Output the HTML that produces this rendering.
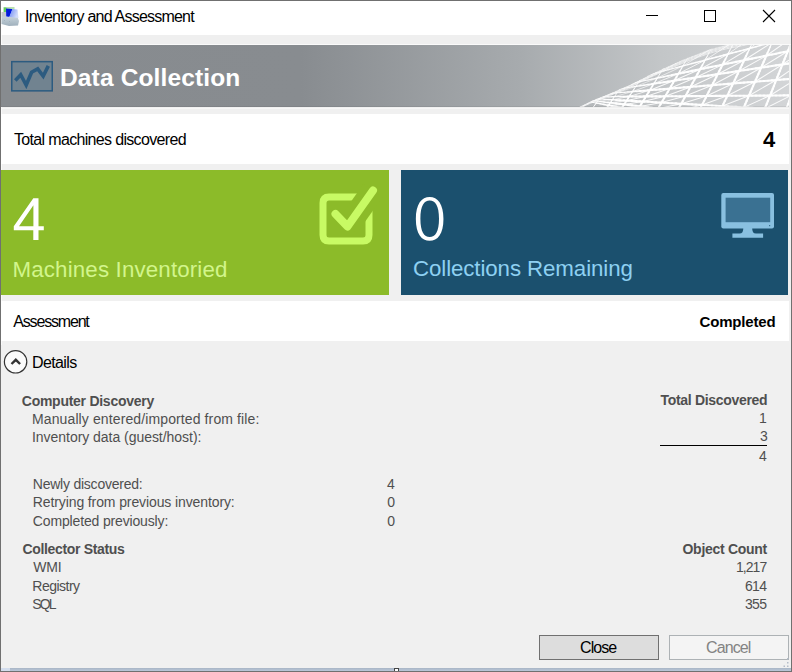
<!DOCTYPE html>
<html><head><meta charset="utf-8">
<style>
html,body{margin:0;padding:0;}
body{width:792px;height:672px;position:relative;overflow:hidden;background:#f0f0f0;font-family:"Liberation Sans",sans-serif;}
.a{position:absolute;}
.t{position:absolute;white-space:nowrap;line-height:1;}
#frame{position:absolute;left:0;top:0;width:792px;height:672px;box-sizing:border-box;border:1px solid #707070;z-index:50;}
</style></head><body>
<div class="a" style="left:0;top:0;width:792px;height:35px;background:#fff"></div>
<div class="a" style="left:0;top:35px;width:792px;height:9px;background:#efefef"></div>
<div class="a" style="left:0;top:44px;width:792px;height:1px;background:#fafafa"></div>
<div class="a" style="left:1px;top:35px;width:1px;height:310px;background:#fafafa"></div>
<!-- header -->
<div class="a" style="left:1px;top:45px;width:788px;height:62px;background:linear-gradient(90deg,#878b8f 0px,#888c90 300px,#a7abae 520px,#c3c6c8 660px,#d3d5d7 788px);overflow:hidden">
<svg width="788" height="62" viewBox="1 45 788 62" style="position:absolute;left:0;top:0"><defs><clipPath id="mc"><path d="M540.0 121.1 L542.0 120.4 L544.0 119.7 L546.0 119.0 L548.0 118.3 L550.0 117.6 L552.0 116.9 L554.0 116.2 L556.0 115.5 L558.0 114.8 L560.0 114.1 L562.0 113.3 L564.0 112.6 L566.0 111.8 L568.0 111.1 L570.0 110.3 L572.0 109.6 L574.0 108.8 L576.0 108.1 L578.0 107.3 L580.0 106.5 L582.0 105.6 L584.0 104.6 L586.0 103.6 L588.0 102.6 L590.0 101.7 L592.0 100.8 L594.0 100.0 L596.0 99.1 L598.0 98.3 L600.0 97.5 L602.0 96.7 L604.0 95.9 L606.0 95.0 L608.0 94.2 L610.0 93.4 L612.0 92.5 L614.0 91.7 L616.0 90.8 L618.0 90.0 L620.0 89.1 L622.0 88.2 L624.0 87.4 L626.0 86.5 L628.0 85.7 L630.0 84.8 L632.0 83.8 L634.0 82.8 L636.0 81.8 L638.0 80.7 L640.0 79.7 L642.0 78.7 L644.0 77.7 L646.0 76.7 L648.0 75.6 L650.0 74.7 L652.0 73.7 L654.0 72.8 L656.0 71.8 L658.0 70.9 L660.0 70.0 L662.0 69.0 L664.0 68.1 L666.0 67.2 L668.0 66.2 L670.0 65.3 L672.0 64.4 L674.0 63.6 L676.0 62.7 L678.0 61.9 L680.0 61.0 L682.0 60.1 L684.0 59.3 L686.0 58.4 L688.0 57.6 L690.0 56.7 L692.0 56.0 L694.0 55.2 L696.0 54.5 L698.0 53.7 L700.0 53.0 L702.0 52.3 L704.0 51.5 L706.0 50.8 L708.0 50.0 L710.0 49.3 L712.0 48.7 L714.0 48.2 L716.0 47.6 L718.0 47.0 L720.0 46.5 L722.0 45.9 L724.0 45.4 L726.0 44.9 L728.0 44.4 L730.0 44.0 L732.0 43.5 L734.0 43.1 L736.0 42.6 L738.0 42.2 L740.0 41.8 L742.0 41.3 L744.0 40.9 L746.0 40.4 L748.0 40.0 L750.0 39.6 L752.0 39.2 L754.0 38.9 L756.0 38.5 L758.0 38.2 L760.0 37.9 L762.0 37.5 L764.0 37.2 L766.0 36.9 L768.0 36.5 L770.0 36.2 L772.0 35.9 L774.0 35.5 L776.0 35.2 L778.0 34.9 L780.0 34.5 L782.0 34.2 L784.0 33.9 L786.0 33.5 L788.0 33.2 L790.0 32.9 L792.0 32.7 L794.0 32.4 L796.0 32.2 L798.0 31.9 L800.0 130.0 L540.0 130.0 Z"/></clipPath></defs><g clip-path="url(#mc)" fill="none" stroke-linecap="round"><path d="M560.0 99.0 L564.0 97.4" stroke="#fff" stroke-width="-1.03" opacity="0.95"/><path d="M564.0 97.4 L568.0 95.8" stroke="#fff" stroke-width="-1.04" opacity="0.95"/><path d="M568.0 95.8 L572.0 94.2" stroke="#fff" stroke-width="-1.05" opacity="0.95"/><path d="M572.0 94.2 L576.0 92.6" stroke="#fff" stroke-width="-1.06" opacity="0.95"/><path d="M576.0 92.6 L580.0 91.0" stroke="#fff" stroke-width="-1.06" opacity="0.95"/><path d="M580.0 91.0 L584.0 89.5" stroke="#fff" stroke-width="-1.03" opacity="0.95"/><path d="M584.0 89.5 L588.0 87.9" stroke="#fff" stroke-width="-0.98" opacity="0.95"/><path d="M588.0 87.9 L592.0 86.3" stroke="#fff" stroke-width="-0.96" opacity="0.95"/><path d="M592.0 86.3 L596.0 84.7" stroke="#fff" stroke-width="-0.95" opacity="0.95"/><path d="M596.0 84.7 L600.0 83.1" stroke="#fff" stroke-width="-0.94" opacity="0.95"/><path d="M600.0 83.1 L604.0 81.5" stroke="#fff" stroke-width="-0.94" opacity="0.95"/><path d="M604.0 81.5 L608.0 79.9" stroke="#fff" stroke-width="-0.93" opacity="0.95"/><path d="M608.0 79.9 L612.0 78.3" stroke="#fff" stroke-width="-0.92" opacity="0.95"/><path d="M612.0 78.3 L616.0 76.7" stroke="#fff" stroke-width="-0.91" opacity="0.95"/><path d="M616.0 76.7 L620.0 75.1" stroke="#fff" stroke-width="-0.90" opacity="0.95"/><path d="M620.0 75.1 L624.0 73.6" stroke="#fff" stroke-width="-0.88" opacity="0.95"/><path d="M624.0 73.6 L628.0 72.0" stroke="#fff" stroke-width="-0.87" opacity="0.95"/><path d="M628.0 72.0 L632.0 70.4" stroke="#fff" stroke-width="-0.84" opacity="0.95"/><path d="M632.0 70.4 L636.0 68.8" stroke="#fff" stroke-width="-0.79" opacity="0.95"/><path d="M636.0 68.8 L640.0 67.2" stroke="#fff" stroke-width="-0.74" opacity="0.95"/><path d="M640.0 67.2 L644.0 65.6" stroke="#fff" stroke-width="-0.69" opacity="0.95"/><path d="M644.0 65.6 L648.0 64.0" stroke="#fff" stroke-width="-0.65" opacity="0.95"/><path d="M648.0 64.0 L652.0 62.4" stroke="#fff" stroke-width="-0.61" opacity="0.95"/><path d="M652.0 62.4 L656.0 60.8" stroke="#fff" stroke-width="-0.58" opacity="0.95"/><path d="M656.0 60.8 L660.0 59.3" stroke="#fff" stroke-width="-0.55" opacity="0.95"/><path d="M660.0 59.3 L664.0 57.7" stroke="#fff" stroke-width="-0.52" opacity="0.95"/><path d="M664.0 57.7 L668.0 56.1" stroke="#fff" stroke-width="-0.49" opacity="0.95"/><path d="M668.0 56.1 L672.0 54.5" stroke="#fff" stroke-width="-0.47" opacity="0.95"/><path d="M672.0 54.5 L676.0 52.9" stroke="#fff" stroke-width="-0.45" opacity="0.95"/><path d="M676.0 52.9 L680.0 51.3" stroke="#fff" stroke-width="-0.44" opacity="0.95"/><path d="M680.0 51.3 L684.0 49.7" stroke="#fff" stroke-width="-0.43" opacity="0.95"/><path d="M684.0 49.7 L688.0 48.1" stroke="#fff" stroke-width="-0.41" opacity="0.95"/><path d="M688.0 48.1 L692.0 46.5" stroke="#fff" stroke-width="-0.41" opacity="0.95"/><path d="M692.0 46.5 L696.0 45.0" stroke="#fff" stroke-width="-0.42" opacity="0.95"/><path d="M696.0 45.0 L700.0 43.4" stroke="#fff" stroke-width="-0.43" opacity="0.95"/><path d="M700.0 43.4 L704.0 41.8" stroke="#fff" stroke-width="-0.44" opacity="0.95"/><path d="M704.0 41.8 L708.0 40.2" stroke="#fff" stroke-width="-0.46" opacity="0.95"/><path d="M708.0 40.2 L712.0 38.6" stroke="#fff" stroke-width="-0.48" opacity="0.95"/><path d="M712.0 38.6 L716.0 37.0" stroke="#fff" stroke-width="-0.53" opacity="0.95"/><path d="M716.0 37.0 L720.0 35.4" stroke="#fff" stroke-width="-0.58" opacity="0.95"/><path d="M720.0 35.4 L724.0 33.8" stroke="#fff" stroke-width="-0.64" opacity="0.95"/><path d="M724.0 33.8 L728.0 32.2" stroke="#fff" stroke-width="-0.70" opacity="0.95"/><path d="M728.0 32.2 L732.0 30.6" stroke="#fff" stroke-width="-0.78" opacity="0.95"/><path d="M732.0 30.6 L736.0 29.1" stroke="#fff" stroke-width="-0.85" opacity="0.95"/><path d="M560.0 98.7 L564.0 97.3" stroke="#fff" stroke-width="-1.04" opacity="0.95"/><path d="M564.0 97.3 L568.0 96.0" stroke="#fff" stroke-width="-1.02" opacity="0.95"/><path d="M568.0 96.0 L572.0 94.7" stroke="#fff" stroke-width="-1.00" opacity="0.95"/><path d="M572.0 94.7 L576.0 93.4" stroke="#fff" stroke-width="-0.98" opacity="0.95"/><path d="M576.0 93.4 L580.0 92.0" stroke="#fff" stroke-width="-0.95" opacity="0.95"/><path d="M580.0 92.0 L584.0 90.7" stroke="#fff" stroke-width="-0.89" opacity="0.95"/><path d="M584.0 90.7 L588.0 89.4" stroke="#fff" stroke-width="-0.82" opacity="0.95"/><path d="M588.0 89.4 L592.0 88.1" stroke="#fff" stroke-width="-0.76" opacity="0.95"/><path d="M592.0 88.1 L596.0 86.8" stroke="#fff" stroke-width="-0.73" opacity="0.95"/><path d="M596.0 86.8 L600.0 85.4" stroke="#fff" stroke-width="-0.69" opacity="0.95"/><path d="M600.0 85.4 L604.0 84.1" stroke="#fff" stroke-width="-0.66" opacity="0.95"/><path d="M604.0 84.1 L608.0 82.8" stroke="#fff" stroke-width="-0.62" opacity="0.95"/><path d="M608.0 82.8 L612.0 81.5" stroke="#fff" stroke-width="-0.59" opacity="0.95"/><path d="M612.0 81.5 L616.0 80.2" stroke="#fff" stroke-width="-0.54" opacity="0.95"/><path d="M616.0 80.2 L620.0 78.8" stroke="#fff" stroke-width="-0.50" opacity="0.95"/><path d="M620.0 78.8 L624.0 77.5" stroke="#fff" stroke-width="-0.46" opacity="0.95"/><path d="M624.0 77.5 L628.0 76.2" stroke="#fff" stroke-width="-0.42" opacity="0.95"/><path d="M628.0 76.2 L632.0 74.9" stroke="#fff" stroke-width="-0.36" opacity="0.95"/><path d="M632.0 74.9 L636.0 73.5" stroke="#fff" stroke-width="-0.28" opacity="0.95"/><path d="M636.0 73.5 L640.0 72.2" stroke="#fff" stroke-width="-0.20" opacity="0.95"/><path d="M640.0 72.2 L644.0 70.9" stroke="#fff" stroke-width="-0.13" opacity="0.95"/><path d="M644.0 70.9 L648.0 69.6" stroke="#fff" stroke-width="-0.05" opacity="0.95"/><path d="M648.0 69.6 L652.0 68.3" stroke="#fff" stroke-width="0.02" opacity="0.95"/><path d="M652.0 68.3 L656.0 66.9" stroke="#fff" stroke-width="0.08" opacity="0.95"/><path d="M656.0 66.9 L660.0 65.6" stroke="#fff" stroke-width="0.13" opacity="0.95"/><path d="M660.0 65.6 L664.0 64.3" stroke="#fff" stroke-width="0.19" opacity="0.95"/><path d="M664.0 64.3 L668.0 63.0" stroke="#fff" stroke-width="0.25" opacity="0.95"/><path d="M668.0 63.0 L672.0 61.7" stroke="#fff" stroke-width="0.30" opacity="0.95"/><path d="M672.0 61.7 L676.0 60.3" stroke="#fff" stroke-width="0.34" opacity="0.95"/><path d="M676.0 60.3 L680.0 59.0" stroke="#fff" stroke-width="0.39" opacity="0.95"/><path d="M680.0 59.0 L684.0 57.7" stroke="#fff" stroke-width="0.43" opacity="0.95"/><path d="M684.0 57.7 L688.0 56.4" stroke="#fff" stroke-width="0.47" opacity="0.95"/><path d="M688.0 56.4 L692.0 55.0" stroke="#fff" stroke-width="0.50" opacity="0.95"/><path d="M692.0 55.0 L696.0 53.7" stroke="#fff" stroke-width="0.52" opacity="0.95"/><path d="M696.0 53.7 L700.0 52.4" stroke="#fff" stroke-width="0.54" opacity="0.95"/><path d="M700.0 52.4 L704.0 51.1" stroke="#fff" stroke-width="0.55" opacity="0.95"/><path d="M704.0 51.1 L708.0 49.8" stroke="#fff" stroke-width="0.57" opacity="0.95"/><path d="M708.0 49.8 L712.0 48.4" stroke="#fff" stroke-width="0.57" opacity="0.95"/><path d="M712.0 48.4 L716.0 47.1" stroke="#fff" stroke-width="0.55" opacity="0.95"/><path d="M716.0 47.1 L720.0 45.8" stroke="#fff" stroke-width="0.53" opacity="0.95"/><path d="M720.0 45.8 L724.0 44.5" stroke="#fff" stroke-width="0.51" opacity="0.95"/><path d="M724.0 44.5 L728.0 43.2" stroke="#fff" stroke-width="0.47" opacity="0.95"/><path d="M728.0 43.2 L732.0 41.8" stroke="#fff" stroke-width="0.42" opacity="0.95"/><path d="M732.0 41.8 L736.0 40.5" stroke="#fff" stroke-width="0.37" opacity="0.95"/><path d="M736.0 40.5 L740.0 39.2" stroke="#fff" stroke-width="0.32" opacity="0.95"/><path d="M740.0 39.2 L744.0 37.9" stroke="#fff" stroke-width="0.28" opacity="0.95"/><path d="M744.0 37.9 L748.0 36.5" stroke="#fff" stroke-width="0.23" opacity="0.95"/><path d="M748.0 36.5 L752.0 35.2" stroke="#fff" stroke-width="0.17" opacity="0.95"/><path d="M752.0 35.2 L756.0 33.9" stroke="#fff" stroke-width="0.10" opacity="0.95"/><path d="M756.0 33.9 L760.0 32.6" stroke="#fff" stroke-width="0.03" opacity="0.95"/><path d="M760.0 32.6 L764.0 31.3" stroke="#fff" stroke-width="-0.04" opacity="0.95"/><path d="M764.0 31.3 L768.0 29.9" stroke="#fff" stroke-width="-0.11" opacity="0.95"/><path d="M560.0 98.3 L564.0 97.3" stroke="#fff" stroke-width="-1.04" opacity="0.95"/><path d="M564.0 97.3 L568.0 96.2" stroke="#fff" stroke-width="-0.99" opacity="0.95"/><path d="M568.0 96.2 L572.0 95.2" stroke="#fff" stroke-width="-0.95" opacity="0.95"/><path d="M572.0 95.2 L576.0 94.1" stroke="#fff" stroke-width="-0.90" opacity="0.95"/><path d="M576.0 94.1 L580.0 93.0" stroke="#fff" stroke-width="-0.84" opacity="0.95"/><path d="M580.0 93.0 L584.0 92.0" stroke="#fff" stroke-width="-0.75" opacity="0.95"/><path d="M584.0 92.0 L588.0 90.9" stroke="#fff" stroke-width="-0.65" opacity="0.95"/><path d="M588.0 90.9 L592.0 89.9" stroke="#fff" stroke-width="-0.57" opacity="0.95"/><path d="M592.0 89.9 L596.0 88.8" stroke="#fff" stroke-width="-0.50" opacity="0.95"/><path d="M596.0 88.8 L600.0 87.8" stroke="#fff" stroke-width="-0.44" opacity="0.95"/><path d="M600.0 87.8 L604.0 86.7" stroke="#fff" stroke-width="-0.38" opacity="0.95"/><path d="M604.0 86.7 L608.0 85.7" stroke="#fff" stroke-width="-0.32" opacity="0.95"/><path d="M608.0 85.7 L612.0 84.6" stroke="#fff" stroke-width="-0.25" opacity="0.95"/><path d="M612.0 84.6 L616.0 83.6" stroke="#fff" stroke-width="-0.18" opacity="0.95"/><path d="M616.0 83.6 L620.0 82.5" stroke="#fff" stroke-width="-0.11" opacity="0.95"/><path d="M620.0 82.5 L624.0 81.5" stroke="#fff" stroke-width="-0.04" opacity="0.95"/><path d="M624.0 81.5 L628.0 80.4" stroke="#fff" stroke-width="0.04" opacity="0.95"/><path d="M628.0 80.4 L632.0 79.4" stroke="#fff" stroke-width="0.12" opacity="0.95"/><path d="M632.0 79.4 L636.0 78.3" stroke="#fff" stroke-width="0.23" opacity="0.95"/><path d="M636.0 78.3 L640.0 77.2" stroke="#fff" stroke-width="0.33" opacity="0.95"/><path d="M640.0 77.2 L644.0 76.2" stroke="#fff" stroke-width="0.44" opacity="0.95"/><path d="M644.0 76.2 L648.0 75.1" stroke="#fff" stroke-width="0.55" opacity="0.95"/><path d="M648.0 75.1 L652.0 74.1" stroke="#fff" stroke-width="0.64" opacity="0.95"/><path d="M652.0 74.1 L656.0 73.0" stroke="#fff" stroke-width="0.73" opacity="0.95"/><path d="M656.0 73.0 L660.0 72.0" stroke="#fff" stroke-width="0.82" opacity="0.95"/><path d="M660.0 72.0 L664.0 70.9" stroke="#fff" stroke-width="0.90" opacity="0.95"/><path d="M664.0 70.9 L668.0 69.9" stroke="#fff" stroke-width="0.99" opacity="0.95"/><path d="M668.0 69.9 L672.0 68.8" stroke="#fff" stroke-width="1.07" opacity="0.95"/><path d="M672.0 68.8 L676.0 67.8" stroke="#fff" stroke-width="1.14" opacity="0.95"/><path d="M676.0 67.8 L680.0 66.7" stroke="#fff" stroke-width="1.21" opacity="0.95"/><path d="M680.0 66.7 L684.0 65.7" stroke="#fff" stroke-width="1.28" opacity="0.95"/><path d="M684.0 65.7 L688.0 64.6" stroke="#fff" stroke-width="1.35" opacity="0.95"/><path d="M688.0 64.6 L692.0 63.5" stroke="#fff" stroke-width="1.41" opacity="0.95"/><path d="M692.0 63.5 L696.0 62.5" stroke="#fff" stroke-width="1.46" opacity="0.95"/><path d="M696.0 62.5 L700.0 61.4" stroke="#fff" stroke-width="1.51" opacity="0.95"/><path d="M700.0 61.4 L704.0 60.4" stroke="#fff" stroke-width="1.55" opacity="0.95"/><path d="M704.0 60.4 L708.0 59.3" stroke="#fff" stroke-width="1.60" opacity="0.95"/><path d="M708.0 59.3 L712.0 58.3" stroke="#fff" stroke-width="1.63" opacity="0.95"/><path d="M712.0 58.3 L716.0 57.2" stroke="#fff" stroke-width="1.63" opacity="0.95"/><path d="M716.0 57.2 L720.0 56.2" stroke="#fff" stroke-width="1.64" opacity="0.95"/><path d="M720.0 56.2 L724.0 55.1" stroke="#fff" stroke-width="1.65" opacity="0.95"/><path d="M724.0 55.1 L728.0 54.1" stroke="#fff" stroke-width="1.64" opacity="0.95"/><path d="M728.0 54.1 L732.0 53.0" stroke="#fff" stroke-width="1.62" opacity="0.95"/><path d="M732.0 53.0 L736.0 52.0" stroke="#fff" stroke-width="1.60" opacity="0.95"/><path d="M736.0 52.0 L740.0 50.9" stroke="#fff" stroke-width="1.58" opacity="0.95"/><path d="M740.0 50.9 L744.0 49.9" stroke="#fff" stroke-width="1.56" opacity="0.95"/><path d="M744.0 49.9 L748.0 48.8" stroke="#fff" stroke-width="1.54" opacity="0.95"/><path d="M748.0 48.8 L752.0 47.7" stroke="#fff" stroke-width="1.51" opacity="0.95"/><path d="M752.0 47.7 L756.0 46.7" stroke="#fff" stroke-width="1.47" opacity="0.95"/><path d="M756.0 46.7 L760.0 45.6" stroke="#fff" stroke-width="1.43" opacity="0.95"/><path d="M760.0 45.6 L764.0 44.6" stroke="#fff" stroke-width="1.39" opacity="0.95"/><path d="M764.0 44.6 L768.0 43.5" stroke="#fff" stroke-width="1.35" opacity="0.95"/><path d="M768.0 43.5 L772.0 42.5" stroke="#fff" stroke-width="1.31" opacity="0.95"/><path d="M772.0 42.5 L776.0 41.4" stroke="#fff" stroke-width="1.27" opacity="0.95"/><path d="M776.0 41.4 L780.0 40.4" stroke="#fff" stroke-width="1.22" opacity="0.95"/><path d="M780.0 40.4 L784.0 39.3" stroke="#fff" stroke-width="1.18" opacity="0.95"/><path d="M784.0 39.3 L788.0 38.3" stroke="#fff" stroke-width="1.14" opacity="0.95"/><path d="M788.0 38.3 L792.0 37.2" stroke="#fff" stroke-width="1.09" opacity="0.95"/><path d="M792.0 37.2 L796.0 36.2" stroke="#fff" stroke-width="1.03" opacity="0.95"/><path d="M560.0 98.0 L564.0 97.2" stroke="#fff" stroke-width="-1.05" opacity="0.95"/><path d="M564.0 97.2 L568.0 96.4" stroke="#fff" stroke-width="-0.98" opacity="0.95"/><path d="M568.0 96.4 L572.0 95.6" stroke="#fff" stroke-width="-0.90" opacity="0.95"/><path d="M572.0 95.6 L576.0 94.7" stroke="#fff" stroke-width="-0.83" opacity="0.95"/><path d="M576.0 94.7 L580.0 93.9" stroke="#fff" stroke-width="-0.75" opacity="0.95"/><path d="M580.0 93.9 L584.0 93.1" stroke="#fff" stroke-width="-0.64" opacity="0.95"/><path d="M584.0 93.1 L588.0 92.3" stroke="#fff" stroke-width="-0.51" opacity="0.95"/><path d="M588.0 92.3 L592.0 91.5" stroke="#fff" stroke-width="-0.40" opacity="0.95"/><path d="M592.0 91.5 L596.0 90.6" stroke="#fff" stroke-width="-0.31" opacity="0.95"/><path d="M596.0 90.6 L600.0 89.8" stroke="#fff" stroke-width="-0.22" opacity="0.95"/><path d="M600.0 89.8 L604.0 89.0" stroke="#fff" stroke-width="-0.14" opacity="0.95"/><path d="M604.0 89.0 L608.0 88.2" stroke="#fff" stroke-width="-0.05" opacity="0.95"/><path d="M608.0 88.2 L612.0 87.3" stroke="#fff" stroke-width="0.04" opacity="0.95"/><path d="M612.0 87.3 L616.0 86.5" stroke="#fff" stroke-width="0.14" opacity="0.95"/><path d="M616.0 86.5 L620.0 85.7" stroke="#fff" stroke-width="0.24" opacity="0.95"/><path d="M620.0 85.7 L624.0 84.9" stroke="#fff" stroke-width="0.33" opacity="0.95"/><path d="M624.0 84.9 L628.0 84.1" stroke="#fff" stroke-width="0.43" opacity="0.95"/><path d="M628.0 84.1 L632.0 83.2" stroke="#fff" stroke-width="0.54" opacity="0.95"/><path d="M632.0 83.2 L636.0 82.4" stroke="#fff" stroke-width="0.67" opacity="0.95"/><path d="M636.0 82.4 L640.0 81.6" stroke="#fff" stroke-width="0.80" opacity="0.95"/><path d="M640.0 81.6 L644.0 80.8" stroke="#fff" stroke-width="0.93" opacity="0.95"/><path d="M644.0 80.8 L648.0 80.0" stroke="#fff" stroke-width="1.06" opacity="0.95"/><path d="M648.0 80.0 L652.0 79.1" stroke="#fff" stroke-width="1.18" opacity="0.95"/><path d="M652.0 79.1 L656.0 78.3" stroke="#fff" stroke-width="1.29" opacity="0.95"/><path d="M656.0 78.3 L660.0 77.5" stroke="#fff" stroke-width="1.41" opacity="0.95"/><path d="M660.0 77.5 L664.0 76.7" stroke="#fff" stroke-width="1.52" opacity="0.95"/><path d="M664.0 76.7 L668.0 75.8" stroke="#fff" stroke-width="1.63" opacity="0.95"/><path d="M668.0 75.8 L672.0 75.0" stroke="#fff" stroke-width="1.73" opacity="0.95"/><path d="M672.0 75.0 L676.0 74.2" stroke="#fff" stroke-width="1.83" opacity="0.95"/><path d="M676.0 74.2 L680.0 73.4" stroke="#fff" stroke-width="1.93" opacity="0.95"/><path d="M680.0 73.4 L684.0 72.6" stroke="#fff" stroke-width="2.02" opacity="0.95"/><path d="M684.0 72.6 L688.0 71.7" stroke="#fff" stroke-width="2.10" opacity="0.95"/><path d="M688.0 71.7 L692.0 70.9" stroke="#fff" stroke-width="2.10" opacity="0.95"/><path d="M692.0 70.9 L696.0 70.1" stroke="#fff" stroke-width="2.10" opacity="0.95"/><path d="M696.0 70.1 L700.0 69.3" stroke="#fff" stroke-width="2.10" opacity="0.95"/><path d="M700.0 69.3 L704.0 68.5" stroke="#fff" stroke-width="2.10" opacity="0.95"/><path d="M704.0 68.5 L708.0 67.6" stroke="#fff" stroke-width="2.10" opacity="0.95"/><path d="M708.0 67.6 L712.0 66.8" stroke="#fff" stroke-width="2.10" opacity="0.95"/><path d="M712.0 66.8 L716.0 66.0" stroke="#fff" stroke-width="2.10" opacity="0.95"/><path d="M716.0 66.0 L720.0 65.2" stroke="#fff" stroke-width="2.10" opacity="0.95"/><path d="M720.0 65.2 L724.0 64.3" stroke="#fff" stroke-width="2.10" opacity="0.95"/><path d="M724.0 64.3 L728.0 63.5" stroke="#fff" stroke-width="2.10" opacity="0.95"/><path d="M728.0 63.5 L732.0 62.7" stroke="#fff" stroke-width="2.10" opacity="0.95"/><path d="M732.0 62.7 L736.0 61.9" stroke="#fff" stroke-width="2.10" opacity="0.95"/><path d="M736.0 61.9 L740.0 61.1" stroke="#fff" stroke-width="2.10" opacity="0.95"/><path d="M740.0 61.1 L744.0 60.2" stroke="#fff" stroke-width="2.10" opacity="0.95"/><path d="M744.0 60.2 L748.0 59.4" stroke="#fff" stroke-width="2.10" opacity="0.95"/><path d="M748.0 59.4 L752.0 58.6" stroke="#fff" stroke-width="2.10" opacity="0.95"/><path d="M752.0 58.6 L756.0 57.8" stroke="#fff" stroke-width="2.10" opacity="0.95"/><path d="M756.0 57.8 L760.0 57.0" stroke="#fff" stroke-width="2.10" opacity="0.95"/><path d="M760.0 57.0 L764.0 56.1" stroke="#fff" stroke-width="2.10" opacity="0.95"/><path d="M764.0 56.1 L768.0 55.3" stroke="#fff" stroke-width="2.10" opacity="0.95"/><path d="M768.0 55.3 L772.0 54.5" stroke="#fff" stroke-width="2.10" opacity="0.95"/><path d="M772.0 54.5 L776.0 53.7" stroke="#fff" stroke-width="2.10" opacity="0.95"/><path d="M776.0 53.7 L780.0 52.8" stroke="#fff" stroke-width="2.10" opacity="0.95"/><path d="M780.0 52.8 L784.0 52.0" stroke="#fff" stroke-width="2.10" opacity="0.95"/><path d="M784.0 52.0 L788.0 51.2" stroke="#fff" stroke-width="2.10" opacity="0.95"/><path d="M788.0 51.2 L792.0 50.4" stroke="#fff" stroke-width="2.10" opacity="0.95"/><path d="M792.0 50.4 L796.0 49.6" stroke="#fff" stroke-width="2.10" opacity="0.95"/><path d="M560.0 97.7 L564.0 97.1" stroke="#fff" stroke-width="-1.05" opacity="0.95"/><path d="M564.0 97.1 L568.0 96.6" stroke="#fff" stroke-width="-0.96" opacity="0.95"/><path d="M568.0 96.6 L572.0 96.0" stroke="#fff" stroke-width="-0.86" opacity="0.95"/><path d="M572.0 96.0 L576.0 95.4" stroke="#fff" stroke-width="-0.76" opacity="0.95"/><path d="M576.0 95.4 L580.0 94.8" stroke="#fff" stroke-width="-0.66" opacity="0.95"/><path d="M580.0 94.8 L584.0 94.2" stroke="#fff" stroke-width="-0.52" opacity="0.95"/><path d="M584.0 94.2 L588.0 93.6" stroke="#fff" stroke-width="-0.37" opacity="0.95"/><path d="M588.0 93.6 L592.0 93.0" stroke="#fff" stroke-width="-0.24" opacity="0.95"/><path d="M592.0 93.0 L596.0 92.4" stroke="#fff" stroke-width="-0.13" opacity="0.95"/><path d="M596.0 92.4 L600.0 91.8" stroke="#fff" stroke-width="-0.01" opacity="0.95"/><path d="M600.0 91.8 L604.0 91.2" stroke="#fff" stroke-width="0.10" opacity="0.95"/><path d="M604.0 91.2 L608.0 90.6" stroke="#fff" stroke-width="0.21" opacity="0.95"/><path d="M608.0 90.6 L612.0 90.0" stroke="#fff" stroke-width="0.32" opacity="0.95"/><path d="M612.0 90.0 L616.0 89.4" stroke="#fff" stroke-width="0.44" opacity="0.95"/><path d="M616.0 89.4 L620.0 88.8" stroke="#fff" stroke-width="0.56" opacity="0.95"/><path d="M620.0 88.8 L624.0 88.2" stroke="#fff" stroke-width="0.68" opacity="0.95"/><path d="M624.0 88.2 L628.0 87.6" stroke="#fff" stroke-width="0.80" opacity="0.95"/><path d="M628.0 87.6 L632.0 87.0" stroke="#fff" stroke-width="0.94" opacity="0.95"/><path d="M632.0 87.0 L636.0 86.4" stroke="#fff" stroke-width="1.09" opacity="0.95"/><path d="M636.0 86.4 L640.0 85.8" stroke="#fff" stroke-width="1.25" opacity="0.95"/><path d="M640.0 85.8 L644.0 85.2" stroke="#fff" stroke-width="1.40" opacity="0.95"/><path d="M644.0 85.2 L648.0 84.6" stroke="#fff" stroke-width="1.56" opacity="0.95"/><path d="M648.0 84.6 L652.0 84.0" stroke="#fff" stroke-width="1.70" opacity="0.95"/><path d="M652.0 84.0 L656.0 83.4" stroke="#fff" stroke-width="1.84" opacity="0.95"/><path d="M656.0 83.4 L660.0 82.8" stroke="#fff" stroke-width="1.97" opacity="0.95"/><path d="M660.0 82.8 L664.0 82.2" stroke="#fff" stroke-width="2.10" opacity="0.95"/><path d="M664.0 82.2 L668.0 81.6" stroke="#fff" stroke-width="2.10" opacity="0.95"/><path d="M668.0 81.6 L672.0 81.0" stroke="#fff" stroke-width="2.10" opacity="0.95"/><path d="M672.0 81.0 L676.0 80.4" stroke="#fff" stroke-width="2.10" opacity="0.95"/><path d="M676.0 80.4 L680.0 79.8" stroke="#fff" stroke-width="2.10" opacity="0.95"/><path d="M680.0 79.8 L684.0 79.2" stroke="#fff" stroke-width="2.10" opacity="0.95"/><path d="M684.0 79.2 L688.0 78.6" stroke="#fff" stroke-width="2.10" opacity="0.95"/><path d="M688.0 78.6 L692.0 78.0" stroke="#fff" stroke-width="2.10" opacity="0.95"/><path d="M692.0 78.0 L696.0 77.4" stroke="#fff" stroke-width="2.10" opacity="0.95"/><path d="M696.0 77.4 L700.0 76.8" stroke="#fff" stroke-width="2.10" opacity="0.95"/><path d="M700.0 76.8 L704.0 76.2" stroke="#fff" stroke-width="2.10" opacity="0.95"/><path d="M704.0 76.2 L708.0 75.6" stroke="#fff" stroke-width="2.10" opacity="0.95"/><path d="M708.0 75.6 L712.0 75.0" stroke="#fff" stroke-width="2.10" opacity="0.95"/><path d="M712.0 75.0 L716.0 74.4" stroke="#fff" stroke-width="2.10" opacity="0.95"/><path d="M716.0 74.4 L720.0 73.8" stroke="#fff" stroke-width="2.10" opacity="0.95"/><path d="M720.0 73.8 L724.0 73.2" stroke="#fff" stroke-width="2.10" opacity="0.95"/><path d="M724.0 73.2 L728.0 72.6" stroke="#fff" stroke-width="2.10" opacity="0.95"/><path d="M728.0 72.6 L732.0 72.0" stroke="#fff" stroke-width="2.10" opacity="0.95"/><path d="M732.0 72.0 L736.0 71.4" stroke="#fff" stroke-width="2.10" opacity="0.95"/><path d="M736.0 71.4 L740.0 70.8" stroke="#fff" stroke-width="2.10" opacity="0.95"/><path d="M740.0 70.8 L744.0 70.2" stroke="#fff" stroke-width="2.10" opacity="0.95"/><path d="M744.0 70.2 L748.0 69.6" stroke="#fff" stroke-width="2.10" opacity="0.95"/><path d="M748.0 69.6 L752.0 69.0" stroke="#fff" stroke-width="2.10" opacity="0.95"/><path d="M752.0 69.0 L756.0 68.4" stroke="#fff" stroke-width="2.10" opacity="0.95"/><path d="M756.0 68.4 L760.0 67.8" stroke="#fff" stroke-width="2.10" opacity="0.95"/><path d="M760.0 67.8 L764.0 67.2" stroke="#fff" stroke-width="2.10" opacity="0.95"/><path d="M764.0 67.2 L768.0 66.6" stroke="#fff" stroke-width="2.10" opacity="0.95"/><path d="M768.0 66.6 L772.0 66.0" stroke="#fff" stroke-width="2.10" opacity="0.95"/><path d="M772.0 66.0 L776.0 65.4" stroke="#fff" stroke-width="2.10" opacity="0.95"/><path d="M776.0 65.4 L780.0 64.8" stroke="#fff" stroke-width="2.10" opacity="0.95"/><path d="M780.0 64.8 L784.0 64.2" stroke="#fff" stroke-width="2.10" opacity="0.95"/><path d="M784.0 64.2 L788.0 63.6" stroke="#fff" stroke-width="2.10" opacity="0.95"/><path d="M788.0 63.6 L792.0 63.1" stroke="#fff" stroke-width="2.10" opacity="0.95"/><path d="M792.0 63.1 L796.0 62.5" stroke="#fff" stroke-width="2.10" opacity="0.95"/><path d="M560.0 97.4 L564.0 97.1" stroke="#fff" stroke-width="-1.06" opacity="0.95"/><path d="M564.0 97.1 L568.0 96.8" stroke="#fff" stroke-width="-0.94" opacity="0.95"/><path d="M568.0 96.8 L572.0 96.4" stroke="#fff" stroke-width="-0.81" opacity="0.95"/><path d="M572.0 96.4 L576.0 96.1" stroke="#fff" stroke-width="-0.68" opacity="0.95"/><path d="M576.0 96.1 L580.0 95.8" stroke="#fff" stroke-width="-0.55" opacity="0.95"/><path d="M580.0 95.8 L584.0 95.5" stroke="#fff" stroke-width="-0.38" opacity="0.95"/><path d="M584.0 95.5 L588.0 95.2" stroke="#fff" stroke-width="-0.20" opacity="0.95"/><path d="M588.0 95.2 L592.0 94.8" stroke="#fff" stroke-width="-0.04" opacity="0.95"/><path d="M592.0 94.8 L596.0 94.5" stroke="#fff" stroke-width="0.10" opacity="0.95"/><path d="M596.0 94.5 L600.0 94.2" stroke="#fff" stroke-width="0.24" opacity="0.95"/><path d="M600.0 94.2 L604.0 93.9" stroke="#fff" stroke-width="0.39" opacity="0.95"/><path d="M604.0 93.9 L608.0 93.5" stroke="#fff" stroke-width="0.53" opacity="0.95"/><path d="M608.0 93.5 L612.0 93.2" stroke="#fff" stroke-width="0.67" opacity="0.95"/><path d="M612.0 93.2 L616.0 92.9" stroke="#fff" stroke-width="0.82" opacity="0.95"/><path d="M616.0 92.9 L620.0 92.6" stroke="#fff" stroke-width="0.97" opacity="0.95"/><path d="M620.0 92.6 L624.0 92.3" stroke="#fff" stroke-width="1.12" opacity="0.95"/><path d="M624.0 92.3 L628.0 91.9" stroke="#fff" stroke-width="1.27" opacity="0.95"/><path d="M628.0 91.9 L632.0 91.6" stroke="#fff" stroke-width="1.44" opacity="0.95"/><path d="M632.0 91.6 L636.0 91.3" stroke="#fff" stroke-width="1.62" opacity="0.95"/><path d="M636.0 91.3 L640.0 91.0" stroke="#fff" stroke-width="1.80" opacity="0.95"/><path d="M640.0 91.0 L644.0 90.7" stroke="#fff" stroke-width="1.99" opacity="0.95"/><path d="M644.0 90.7 L648.0 90.3" stroke="#fff" stroke-width="2.10" opacity="0.95"/><path d="M648.0 90.3 L652.0 90.0" stroke="#fff" stroke-width="2.10" opacity="0.95"/><path d="M652.0 90.0 L656.0 89.7" stroke="#fff" stroke-width="2.10" opacity="0.95"/><path d="M656.0 89.7 L660.0 89.4" stroke="#fff" stroke-width="2.10" opacity="0.95"/><path d="M660.0 89.4 L664.0 89.0" stroke="#fff" stroke-width="2.10" opacity="0.95"/><path d="M664.0 89.0 L668.0 88.7" stroke="#fff" stroke-width="2.10" opacity="0.95"/><path d="M668.0 88.7 L672.0 88.4" stroke="#fff" stroke-width="2.10" opacity="0.95"/><path d="M672.0 88.4 L676.0 88.1" stroke="#fff" stroke-width="2.10" opacity="0.95"/><path d="M676.0 88.1 L680.0 87.8" stroke="#fff" stroke-width="2.10" opacity="0.95"/><path d="M680.0 87.8 L684.0 87.4" stroke="#fff" stroke-width="2.10" opacity="0.95"/><path d="M684.0 87.4 L688.0 87.1" stroke="#fff" stroke-width="2.10" opacity="0.95"/><path d="M688.0 87.1 L692.0 86.8" stroke="#fff" stroke-width="2.10" opacity="0.95"/><path d="M692.0 86.8 L696.0 86.5" stroke="#fff" stroke-width="2.10" opacity="0.95"/><path d="M696.0 86.5 L700.0 86.2" stroke="#fff" stroke-width="2.10" opacity="0.95"/><path d="M700.0 86.2 L704.0 85.8" stroke="#fff" stroke-width="2.10" opacity="0.95"/><path d="M704.0 85.8 L708.0 85.5" stroke="#fff" stroke-width="2.10" opacity="0.95"/><path d="M708.0 85.5 L712.0 85.2" stroke="#fff" stroke-width="2.10" opacity="0.95"/><path d="M712.0 85.2 L716.0 84.9" stroke="#fff" stroke-width="2.10" opacity="0.95"/><path d="M716.0 84.9 L720.0 84.5" stroke="#fff" stroke-width="2.10" opacity="0.95"/><path d="M720.0 84.5 L724.0 84.2" stroke="#fff" stroke-width="2.10" opacity="0.95"/><path d="M724.0 84.2 L728.0 83.9" stroke="#fff" stroke-width="2.10" opacity="0.95"/><path d="M728.0 83.9 L732.0 83.6" stroke="#fff" stroke-width="2.10" opacity="0.95"/><path d="M732.0 83.6 L736.0 83.3" stroke="#fff" stroke-width="2.10" opacity="0.95"/><path d="M736.0 83.3 L740.0 82.9" stroke="#fff" stroke-width="2.10" opacity="0.95"/><path d="M740.0 82.9 L744.0 82.6" stroke="#fff" stroke-width="2.10" opacity="0.95"/><path d="M744.0 82.6 L748.0 82.3" stroke="#fff" stroke-width="2.10" opacity="0.95"/><path d="M748.0 82.3 L752.0 82.0" stroke="#fff" stroke-width="2.10" opacity="0.95"/><path d="M752.0 82.0 L756.0 81.7" stroke="#fff" stroke-width="2.10" opacity="0.95"/><path d="M756.0 81.7 L760.0 81.3" stroke="#fff" stroke-width="2.10" opacity="0.95"/><path d="M760.0 81.3 L764.0 81.0" stroke="#fff" stroke-width="2.10" opacity="0.95"/><path d="M764.0 81.0 L768.0 80.7" stroke="#fff" stroke-width="2.10" opacity="0.95"/><path d="M768.0 80.7 L772.0 80.4" stroke="#fff" stroke-width="2.10" opacity="0.95"/><path d="M772.0 80.4 L776.0 80.0" stroke="#fff" stroke-width="2.10" opacity="0.95"/><path d="M776.0 80.0 L780.0 79.7" stroke="#fff" stroke-width="2.10" opacity="0.95"/><path d="M780.0 79.7 L784.0 79.4" stroke="#fff" stroke-width="2.10" opacity="0.95"/><path d="M784.0 79.4 L788.0 79.1" stroke="#fff" stroke-width="2.10" opacity="0.95"/><path d="M788.0 79.1 L792.0 78.8" stroke="#fff" stroke-width="2.10" opacity="0.95"/><path d="M792.0 78.8 L796.0 78.4" stroke="#fff" stroke-width="2.10" opacity="0.95"/><path d="M560.0 97.0 L564.0 97.0" stroke="#fff" stroke-width="-1.07" opacity="0.95"/><path d="M564.0 97.0 L568.0 97.0" stroke="#fff" stroke-width="-0.91" opacity="0.95"/><path d="M568.0 97.0 L572.0 97.0" stroke="#fff" stroke-width="-0.75" opacity="0.95"/><path d="M572.0 97.0 L576.0 96.9" stroke="#fff" stroke-width="-0.60" opacity="0.95"/><path d="M576.0 96.9 L580.0 96.9" stroke="#fff" stroke-width="-0.43" opacity="0.95"/><path d="M580.0 96.9 L584.0 96.9" stroke="#fff" stroke-width="-0.23" opacity="0.95"/><path d="M584.0 96.9 L588.0 96.8" stroke="#fff" stroke-width="-0.02" opacity="0.95"/><path d="M588.0 96.8 L592.0 96.8" stroke="#fff" stroke-width="0.17" opacity="0.95"/><path d="M592.0 96.8 L596.0 96.8" stroke="#fff" stroke-width="0.35" opacity="0.95"/><path d="M596.0 96.8 L600.0 96.8" stroke="#fff" stroke-width="0.52" opacity="0.95"/><path d="M600.0 96.8 L604.0 96.7" stroke="#fff" stroke-width="0.69" opacity="0.95"/><path d="M604.0 96.7 L608.0 96.7" stroke="#fff" stroke-width="0.86" opacity="0.95"/><path d="M608.0 96.7 L612.0 96.7" stroke="#fff" stroke-width="1.04" opacity="0.95"/><path d="M612.0 96.7 L616.0 96.6" stroke="#fff" stroke-width="1.22" opacity="0.95"/><path d="M616.0 96.6 L620.0 96.6" stroke="#fff" stroke-width="1.40" opacity="0.95"/><path d="M620.0 96.6 L624.0 96.6" stroke="#fff" stroke-width="1.58" opacity="0.95"/><path d="M624.0 96.6 L628.0 96.5" stroke="#fff" stroke-width="1.77" opacity="0.95"/><path d="M628.0 96.5 L632.0 96.5" stroke="#fff" stroke-width="1.96" opacity="0.95"/><path d="M632.0 96.5 L636.0 96.5" stroke="#fff" stroke-width="2.10" opacity="0.95"/><path d="M636.0 96.5 L640.0 96.5" stroke="#fff" stroke-width="2.10" opacity="0.95"/><path d="M640.0 96.5 L644.0 96.4" stroke="#fff" stroke-width="2.10" opacity="0.95"/><path d="M644.0 96.4 L648.0 96.4" stroke="#fff" stroke-width="2.10" opacity="0.95"/><path d="M648.0 96.4 L652.0 96.4" stroke="#fff" stroke-width="2.10" opacity="0.95"/><path d="M652.0 96.4 L656.0 96.4" stroke="#fff" stroke-width="2.10" opacity="0.95"/><path d="M656.0 96.4 L660.0 96.3" stroke="#fff" stroke-width="2.10" opacity="0.95"/><path d="M660.0 96.3 L664.0 96.3" stroke="#fff" stroke-width="2.10" opacity="0.95"/><path d="M664.0 96.3 L668.0 96.3" stroke="#fff" stroke-width="2.10" opacity="0.95"/><path d="M668.0 96.3 L672.0 96.2" stroke="#fff" stroke-width="2.10" opacity="0.95"/><path d="M672.0 96.2 L676.0 96.2" stroke="#fff" stroke-width="2.10" opacity="0.95"/><path d="M676.0 96.2 L680.0 96.2" stroke="#fff" stroke-width="2.10" opacity="0.95"/><path d="M680.0 96.2 L684.0 96.2" stroke="#fff" stroke-width="2.10" opacity="0.95"/><path d="M684.0 96.2 L688.0 96.1" stroke="#fff" stroke-width="2.10" opacity="0.95"/><path d="M688.0 96.1 L692.0 96.1" stroke="#fff" stroke-width="2.10" opacity="0.95"/><path d="M692.0 96.1 L696.0 96.1" stroke="#fff" stroke-width="2.10" opacity="0.95"/><path d="M696.0 96.1 L700.0 96.0" stroke="#fff" stroke-width="2.10" opacity="0.95"/><path d="M700.0 96.0 L704.0 96.0" stroke="#fff" stroke-width="2.10" opacity="0.95"/><path d="M704.0 96.0 L708.0 96.0" stroke="#fff" stroke-width="2.10" opacity="0.95"/><path d="M708.0 96.0 L712.0 96.0" stroke="#fff" stroke-width="2.10" opacity="0.95"/><path d="M712.0 96.0 L716.0 95.9" stroke="#fff" stroke-width="2.10" opacity="0.95"/><path d="M716.0 95.9 L720.0 95.9" stroke="#fff" stroke-width="2.10" opacity="0.95"/><path d="M720.0 95.9 L724.0 95.9" stroke="#fff" stroke-width="2.10" opacity="0.95"/><path d="M724.0 95.9 L728.0 95.8" stroke="#fff" stroke-width="2.10" opacity="0.95"/><path d="M728.0 95.8 L732.0 95.8" stroke="#fff" stroke-width="2.10" opacity="0.95"/><path d="M732.0 95.8 L736.0 95.8" stroke="#fff" stroke-width="2.10" opacity="0.95"/><path d="M736.0 95.8 L740.0 95.8" stroke="#fff" stroke-width="2.10" opacity="0.95"/><path d="M740.0 95.8 L744.0 95.7" stroke="#fff" stroke-width="2.10" opacity="0.95"/><path d="M744.0 95.7 L748.0 95.7" stroke="#fff" stroke-width="2.10" opacity="0.95"/><path d="M748.0 95.7 L752.0 95.7" stroke="#fff" stroke-width="2.10" opacity="0.95"/><path d="M752.0 95.7 L756.0 95.6" stroke="#fff" stroke-width="2.10" opacity="0.95"/><path d="M756.0 95.6 L760.0 95.6" stroke="#fff" stroke-width="2.10" opacity="0.95"/><path d="M760.0 95.6 L764.0 95.6" stroke="#fff" stroke-width="2.10" opacity="0.95"/><path d="M764.0 95.6 L768.0 95.6" stroke="#fff" stroke-width="2.10" opacity="0.95"/><path d="M768.0 95.6 L772.0 95.5" stroke="#fff" stroke-width="2.10" opacity="0.95"/><path d="M772.0 95.5 L776.0 95.5" stroke="#fff" stroke-width="2.10" opacity="0.95"/><path d="M776.0 95.5 L780.0 95.5" stroke="#fff" stroke-width="2.10" opacity="0.95"/><path d="M780.0 95.5 L784.0 95.4" stroke="#fff" stroke-width="2.10" opacity="0.95"/><path d="M784.0 95.4 L788.0 95.4" stroke="#fff" stroke-width="2.10" opacity="0.95"/><path d="M788.0 95.4 L792.0 95.4" stroke="#fff" stroke-width="2.10" opacity="0.95"/><path d="M792.0 95.4 L796.0 95.4" stroke="#fff" stroke-width="2.10" opacity="0.95"/><path d="M560.0 96.7 L564.0 96.9" stroke="#fff" stroke-width="-1.08" opacity="0.95"/><path d="M564.0 96.9 L568.0 97.2" stroke="#fff" stroke-width="-0.89" opacity="0.95"/><path d="M568.0 97.2 L572.0 97.4" stroke="#fff" stroke-width="-0.71" opacity="0.95"/><path d="M572.0 97.4 L576.0 97.6" stroke="#fff" stroke-width="-0.52" opacity="0.95"/><path d="M576.0 97.6 L580.0 97.9" stroke="#fff" stroke-width="-0.33" opacity="0.95"/><path d="M580.0 97.9 L584.0 98.1" stroke="#fff" stroke-width="-0.10" opacity="0.95"/><path d="M584.0 98.1 L588.0 98.3" stroke="#fff" stroke-width="0.14" opacity="0.95"/><path d="M588.0 98.3 L592.0 98.6" stroke="#fff" stroke-width="0.36" opacity="0.95"/><path d="M592.0 98.6 L596.0 98.8" stroke="#fff" stroke-width="0.56" opacity="0.95"/><path d="M596.0 98.8 L600.0 99.0" stroke="#fff" stroke-width="0.76" opacity="0.95"/><path d="M600.0 99.0 L604.0 99.3" stroke="#fff" stroke-width="0.96" opacity="0.95"/><path d="M604.0 99.3 L608.0 99.5" stroke="#fff" stroke-width="1.16" opacity="0.95"/><path d="M608.0 99.5 L612.0 99.7" stroke="#fff" stroke-width="1.37" opacity="0.95"/><path d="M612.0 99.7 L616.0 100.0" stroke="#fff" stroke-width="1.58" opacity="0.95"/><path d="M616.0 100.0 L620.0 100.2" stroke="#fff" stroke-width="1.79" opacity="0.95"/><path d="M620.0 100.2 L624.0 100.4" stroke="#fff" stroke-width="2.00" opacity="0.95"/><path d="M624.0 100.4 L628.0 100.7" stroke="#fff" stroke-width="2.10" opacity="0.95"/><path d="M628.0 100.7 L632.0 100.9" stroke="#fff" stroke-width="2.10" opacity="0.95"/><path d="M632.0 100.9 L636.0 101.1" stroke="#fff" stroke-width="2.10" opacity="0.95"/><path d="M636.0 101.1 L640.0 101.4" stroke="#fff" stroke-width="2.10" opacity="0.95"/><path d="M640.0 101.4 L644.0 101.6" stroke="#fff" stroke-width="2.10" opacity="0.95"/><path d="M644.0 101.6 L648.0 101.8" stroke="#fff" stroke-width="2.10" opacity="0.95"/><path d="M648.0 101.8 L652.0 102.0" stroke="#fff" stroke-width="2.10" opacity="0.95"/><path d="M652.0 102.0 L656.0 102.3" stroke="#fff" stroke-width="2.10" opacity="0.95"/><path d="M656.0 102.3 L660.0 102.5" stroke="#fff" stroke-width="2.10" opacity="0.95"/><path d="M660.0 102.5 L664.0 102.7" stroke="#fff" stroke-width="2.10" opacity="0.95"/><path d="M664.0 102.7 L668.0 103.0" stroke="#fff" stroke-width="2.10" opacity="0.95"/><path d="M668.0 103.0 L672.0 103.2" stroke="#fff" stroke-width="2.10" opacity="0.95"/><path d="M672.0 103.2 L676.0 103.4" stroke="#fff" stroke-width="2.10" opacity="0.95"/><path d="M676.0 103.4 L680.0 103.7" stroke="#fff" stroke-width="2.10" opacity="0.95"/><path d="M680.0 103.7 L684.0 103.9" stroke="#fff" stroke-width="2.10" opacity="0.95"/><path d="M684.0 103.9 L688.0 104.1" stroke="#fff" stroke-width="2.10" opacity="0.95"/><path d="M688.0 104.1 L692.0 104.4" stroke="#fff" stroke-width="2.10" opacity="0.95"/><path d="M692.0 104.4 L696.0 104.6" stroke="#fff" stroke-width="2.10" opacity="0.95"/><path d="M696.0 104.6 L700.0 104.8" stroke="#fff" stroke-width="2.10" opacity="0.95"/><path d="M700.0 104.8 L704.0 105.1" stroke="#fff" stroke-width="2.10" opacity="0.95"/><path d="M704.0 105.1 L708.0 105.3" stroke="#fff" stroke-width="2.10" opacity="0.95"/><path d="M708.0 105.3 L712.0 105.5" stroke="#fff" stroke-width="2.10" opacity="0.95"/><path d="M712.0 105.5 L716.0 105.8" stroke="#fff" stroke-width="2.10" opacity="0.95"/><path d="M716.0 105.8 L720.0 106.0" stroke="#fff" stroke-width="2.10" opacity="0.95"/><path d="M720.0 106.0 L724.0 106.2" stroke="#fff" stroke-width="2.10" opacity="0.95"/><path d="M724.0 106.2 L728.0 106.5" stroke="#fff" stroke-width="2.10" opacity="0.95"/><path d="M728.0 106.5 L732.0 106.7" stroke="#fff" stroke-width="2.10" opacity="0.95"/><path d="M732.0 106.7 L736.0 106.9" stroke="#fff" stroke-width="2.10" opacity="0.95"/><path d="M736.0 106.9 L740.0 107.2" stroke="#fff" stroke-width="2.10" opacity="0.95"/><path d="M740.0 107.2 L744.0 107.4" stroke="#fff" stroke-width="2.10" opacity="0.95"/><path d="M744.0 107.4 L748.0 107.6" stroke="#fff" stroke-width="2.10" opacity="0.95"/><path d="M748.0 107.6 L752.0 107.9" stroke="#fff" stroke-width="2.10" opacity="0.95"/><path d="M752.0 107.9 L756.0 108.1" stroke="#fff" stroke-width="2.10" opacity="0.95"/><path d="M756.0 108.1 L760.0 108.3" stroke="#fff" stroke-width="2.10" opacity="0.95"/><path d="M760.0 108.3 L764.0 108.5" stroke="#fff" stroke-width="2.10" opacity="0.95"/><path d="M764.0 108.5 L768.0 108.8" stroke="#fff" stroke-width="2.10" opacity="0.95"/><path d="M768.0 108.8 L772.0 109.0" stroke="#fff" stroke-width="2.10" opacity="0.95"/><path d="M772.0 109.0 L776.0 109.2" stroke="#fff" stroke-width="2.10" opacity="0.95"/><path d="M776.0 109.2 L780.0 109.5" stroke="#fff" stroke-width="2.10" opacity="0.95"/><path d="M780.0 109.5 L784.0 109.7" stroke="#fff" stroke-width="2.10" opacity="0.95"/><path d="M784.0 109.7 L788.0 109.9" stroke="#fff" stroke-width="2.10" opacity="0.95"/><path d="M788.0 109.9 L792.0 110.2" stroke="#fff" stroke-width="2.10" opacity="0.95"/><path d="M792.0 110.2 L796.0 110.4" stroke="#fff" stroke-width="2.10" opacity="0.95"/><path d="M560.0 96.4 L564.0 96.9" stroke="#fff" stroke-width="-1.08" opacity="0.95"/><path d="M564.0 96.9 L568.0 97.4" stroke="#fff" stroke-width="-0.87" opacity="0.95"/><path d="M568.0 97.4 L572.0 97.9" stroke="#fff" stroke-width="-0.66" opacity="0.95"/><path d="M572.0 97.9 L576.0 98.4" stroke="#fff" stroke-width="-0.44" opacity="0.95"/><path d="M576.0 98.4 L580.0 98.9" stroke="#fff" stroke-width="-0.22" opacity="0.95"/><path d="M580.0 98.9 L584.0 99.4" stroke="#fff" stroke-width="0.04" opacity="0.95"/><path d="M584.0 99.4 L588.0 99.9" stroke="#fff" stroke-width="0.31" opacity="0.95"/><path d="M588.0 99.9 L592.0 100.4" stroke="#fff" stroke-width="0.56" opacity="0.95"/><path d="M592.0 100.4 L596.0 100.9" stroke="#fff" stroke-width="0.79" opacity="0.95"/><path d="M596.0 100.9 L600.0 101.4" stroke="#fff" stroke-width="1.01" opacity="0.95"/><path d="M600.0 101.4 L604.0 101.9" stroke="#fff" stroke-width="1.24" opacity="0.95"/><path d="M604.0 101.9 L608.0 102.4" stroke="#fff" stroke-width="1.47" opacity="0.95"/><path d="M608.0 102.4 L612.0 102.9" stroke="#fff" stroke-width="1.71" opacity="0.95"/><path d="M612.0 102.9 L616.0 103.4" stroke="#fff" stroke-width="1.94" opacity="0.95"/><path d="M616.0 103.4 L620.0 103.9" stroke="#fff" stroke-width="2.10" opacity="0.95"/><path d="M620.0 103.9 L624.0 104.4" stroke="#fff" stroke-width="2.10" opacity="0.95"/><path d="M624.0 104.4 L628.0 104.9" stroke="#fff" stroke-width="2.10" opacity="0.95"/><path d="M628.0 104.9 L632.0 105.4" stroke="#fff" stroke-width="2.10" opacity="0.95"/><path d="M632.0 105.4 L636.0 105.9" stroke="#fff" stroke-width="2.10" opacity="0.95"/><path d="M636.0 105.9 L640.0 106.4" stroke="#fff" stroke-width="2.10" opacity="0.95"/><path d="M640.0 106.4 L644.0 106.9" stroke="#fff" stroke-width="2.10" opacity="0.95"/><path d="M644.0 106.9 L648.0 107.4" stroke="#fff" stroke-width="2.10" opacity="0.95"/><path d="M648.0 107.4 L652.0 107.9" stroke="#fff" stroke-width="2.10" opacity="0.95"/><path d="M652.0 107.9 L656.0 108.4" stroke="#fff" stroke-width="2.10" opacity="0.95"/><path d="M656.0 108.4 L660.0 108.9" stroke="#fff" stroke-width="2.10" opacity="0.95"/><path d="M660.0 108.9 L664.0 109.4" stroke="#fff" stroke-width="2.10" opacity="0.95"/><path d="M664.0 109.4 L668.0 109.9" stroke="#fff" stroke-width="2.10" opacity="0.95"/><path d="M668.0 109.9 L672.0 110.4" stroke="#fff" stroke-width="2.10" opacity="0.95"/><path d="M672.0 110.4 L676.0 110.9" stroke="#fff" stroke-width="2.10" opacity="0.95"/><path d="M676.0 110.9 L680.0 111.4" stroke="#fff" stroke-width="2.10" opacity="0.95"/><path d="M680.0 111.4 L684.0 111.9" stroke="#fff" stroke-width="2.10" opacity="0.95"/><path d="M684.0 111.9 L688.0 112.4" stroke="#fff" stroke-width="2.10" opacity="0.95"/><path d="M688.0 112.4 L692.0 112.9" stroke="#fff" stroke-width="2.10" opacity="0.95"/><path d="M692.0 112.9 L696.0 113.4" stroke="#fff" stroke-width="2.10" opacity="0.95"/><path d="M696.0 113.4 L700.0 113.9" stroke="#fff" stroke-width="2.10" opacity="0.95"/><path d="M700.0 113.9 L704.0 114.4" stroke="#fff" stroke-width="2.10" opacity="0.95"/><path d="M704.0 114.4 L708.0 114.9" stroke="#fff" stroke-width="2.10" opacity="0.95"/><path d="M708.0 114.9 L712.0 115.4" stroke="#fff" stroke-width="2.10" opacity="0.95"/><path d="M712.0 115.4 L716.0 115.9" stroke="#fff" stroke-width="2.10" opacity="0.95"/><path d="M716.0 115.9 L720.0 116.4" stroke="#fff" stroke-width="2.10" opacity="0.95"/><path d="M720.0 116.4 L724.0 116.9" stroke="#fff" stroke-width="2.10" opacity="0.95"/><path d="M724.0 116.9 L728.0 117.4" stroke="#fff" stroke-width="2.10" opacity="0.95"/><path d="M728.0 117.4 L732.0 117.9" stroke="#fff" stroke-width="2.10" opacity="0.95"/><path d="M732.0 117.9 L736.0 118.4" stroke="#fff" stroke-width="2.10" opacity="0.95"/><path d="M736.0 118.4 L740.0 118.9" stroke="#fff" stroke-width="2.10" opacity="0.95"/><path d="M740.0 118.9 L744.0 119.4" stroke="#fff" stroke-width="2.10" opacity="0.95"/><path d="M744.0 119.4 L748.0 119.9" stroke="#fff" stroke-width="2.10" opacity="0.95"/><path d="M748.0 119.9 L752.0 120.4" stroke="#fff" stroke-width="2.10" opacity="0.95"/><path d="M752.0 120.4 L756.0 120.9" stroke="#fff" stroke-width="2.10" opacity="0.95"/><path d="M756.0 120.9 L760.0 121.4" stroke="#fff" stroke-width="2.10" opacity="0.95"/><path d="M760.0 121.4 L764.0 121.9" stroke="#fff" stroke-width="2.10" opacity="0.95"/><path d="M764.0 121.9 L768.0 122.4" stroke="#fff" stroke-width="2.10" opacity="0.95"/><path d="M768.0 122.4 L772.0 122.9" stroke="#fff" stroke-width="2.10" opacity="0.95"/><path d="M772.0 122.9 L776.0 123.4" stroke="#fff" stroke-width="2.10" opacity="0.95"/><path d="M776.0 123.4 L780.0 123.9" stroke="#fff" stroke-width="2.10" opacity="0.95"/><path d="M780.0 123.9 L784.0 124.4" stroke="#fff" stroke-width="2.10" opacity="0.95"/><path d="M784.0 124.4 L788.0 124.9" stroke="#fff" stroke-width="2.10" opacity="0.95"/><path d="M788.0 124.9 L792.0 125.4" stroke="#fff" stroke-width="2.10" opacity="0.95"/><path d="M560.0 96.0 L564.0 96.8" stroke="#fff" stroke-width="-1.09" opacity="0.95"/><path d="M564.0 96.8 L568.0 97.6" stroke="#fff" stroke-width="-0.85" opacity="0.95"/><path d="M568.0 97.6 L572.0 98.3" stroke="#fff" stroke-width="-0.61" opacity="0.95"/><path d="M572.0 98.3 L576.0 99.1" stroke="#fff" stroke-width="-0.36" opacity="0.95"/><path d="M576.0 99.1 L580.0 99.9" stroke="#fff" stroke-width="-0.11" opacity="0.95"/><path d="M580.0 99.9 L584.0 100.6" stroke="#fff" stroke-width="0.17" opacity="0.95"/><path d="M584.0 100.6 L588.0 101.4" stroke="#fff" stroke-width="0.47" opacity="0.95"/><path d="M588.0 101.4 L592.0 102.2" stroke="#fff" stroke-width="0.75" opacity="0.95"/><path d="M592.0 102.2 L596.0 103.0" stroke="#fff" stroke-width="1.01" opacity="0.95"/><path d="M596.0 103.0 L600.0 103.7" stroke="#fff" stroke-width="1.27" opacity="0.95"/><path d="M600.0 103.7 L604.0 104.5" stroke="#fff" stroke-width="1.52" opacity="0.95"/><path d="M604.0 104.5 L608.0 105.3" stroke="#fff" stroke-width="1.78" opacity="0.95"/><path d="M608.0 105.3 L612.0 106.0" stroke="#fff" stroke-width="2.04" opacity="0.95"/><path d="M612.0 106.0 L616.0 106.8" stroke="#fff" stroke-width="2.10" opacity="0.95"/><path d="M616.0 106.8 L620.0 107.6" stroke="#fff" stroke-width="2.10" opacity="0.95"/><path d="M620.0 107.6 L624.0 108.3" stroke="#fff" stroke-width="2.10" opacity="0.95"/><path d="M624.0 108.3 L628.0 109.1" stroke="#fff" stroke-width="2.10" opacity="0.95"/><path d="M628.0 109.1 L632.0 109.9" stroke="#fff" stroke-width="2.10" opacity="0.95"/><path d="M632.0 109.9 L636.0 110.6" stroke="#fff" stroke-width="2.10" opacity="0.95"/><path d="M636.0 110.6 L640.0 111.4" stroke="#fff" stroke-width="2.10" opacity="0.95"/><path d="M640.0 111.4 L644.0 112.2" stroke="#fff" stroke-width="2.10" opacity="0.95"/><path d="M644.0 112.2 L648.0 112.9" stroke="#fff" stroke-width="2.10" opacity="0.95"/><path d="M648.0 112.9 L652.0 113.7" stroke="#fff" stroke-width="2.10" opacity="0.95"/><path d="M652.0 113.7 L656.0 114.5" stroke="#fff" stroke-width="2.10" opacity="0.95"/><path d="M656.0 114.5 L660.0 115.2" stroke="#fff" stroke-width="2.10" opacity="0.95"/><path d="M660.0 115.2 L664.0 116.0" stroke="#fff" stroke-width="2.10" opacity="0.95"/><path d="M664.0 116.0 L668.0 116.8" stroke="#fff" stroke-width="2.10" opacity="0.95"/><path d="M668.0 116.8 L672.0 117.5" stroke="#fff" stroke-width="2.10" opacity="0.95"/><path d="M672.0 117.5 L676.0 118.3" stroke="#fff" stroke-width="2.10" opacity="0.95"/><path d="M676.0 118.3 L680.0 119.1" stroke="#fff" stroke-width="2.10" opacity="0.95"/><path d="M680.0 119.1 L684.0 119.8" stroke="#fff" stroke-width="2.10" opacity="0.95"/><path d="M684.0 119.8 L688.0 120.6" stroke="#fff" stroke-width="2.10" opacity="0.95"/><path d="M688.0 120.6 L692.0 121.4" stroke="#fff" stroke-width="2.10" opacity="0.95"/><path d="M692.0 121.4 L696.0 122.1" stroke="#fff" stroke-width="2.10" opacity="0.95"/><path d="M696.0 122.1 L700.0 122.9" stroke="#fff" stroke-width="2.10" opacity="0.95"/><path d="M700.0 122.9 L704.0 123.7" stroke="#fff" stroke-width="2.10" opacity="0.95"/><path d="M704.0 123.7 L708.0 124.5" stroke="#fff" stroke-width="2.10" opacity="0.95"/><path d="M708.0 124.5 L712.0 125.2" stroke="#fff" stroke-width="2.10" opacity="0.95"/><path d="M560.0 114.3 L564.0 112.8" stroke="#fff" stroke-width="0.70" opacity="0.8"/><path d="M564.0 112.8 L568.0 111.4" stroke="#fff" stroke-width="0.70" opacity="0.8"/><path d="M568.0 111.4 L572.0 109.9" stroke="#fff" stroke-width="0.70" opacity="0.8"/><path d="M572.0 109.9 L576.0 108.4" stroke="#fff" stroke-width="0.70" opacity="0.8"/><path d="M576.0 108.4 L580.0 106.8" stroke="#fff" stroke-width="0.70" opacity="0.8"/><path d="M580.0 106.8 L584.0 104.9" stroke="#fff" stroke-width="0.70" opacity="0.8"/><path d="M584.0 104.9 L588.0 103.0" stroke="#fff" stroke-width="0.70" opacity="0.8"/><path d="M588.0 103.0 L592.0 101.1" stroke="#fff" stroke-width="0.70" opacity="0.8"/><path d="M592.0 101.1 L596.0 99.5" stroke="#fff" stroke-width="0.70" opacity="0.8"/><path d="M596.0 99.5 L600.0 97.9" stroke="#fff" stroke-width="0.70" opacity="0.8"/><path d="M600.0 97.9 L604.0 96.2" stroke="#fff" stroke-width="0.70" opacity="0.8"/><path d="M604.0 96.2 L608.0 94.6" stroke="#fff" stroke-width="0.70" opacity="0.8"/><path d="M608.0 94.6 L612.0 93.0" stroke="#fff" stroke-width="0.70" opacity="0.8"/><path d="M612.0 93.0 L616.0 91.2" stroke="#fff" stroke-width="0.70" opacity="0.8"/><path d="M616.0 91.2 L620.0 89.5" stroke="#fff" stroke-width="0.70" opacity="0.8"/><path d="M620.0 89.5 L624.0 87.8" stroke="#fff" stroke-width="0.70" opacity="0.8"/><path d="M624.0 87.8 L628.0 86.1" stroke="#fff" stroke-width="0.70" opacity="0.8"/><path d="M628.0 86.1 L632.0 84.3" stroke="#fff" stroke-width="0.70" opacity="0.8"/><path d="M632.0 84.3 L636.0 82.3" stroke="#fff" stroke-width="0.70" opacity="0.8"/><path d="M636.0 82.3 L640.0 80.2" stroke="#fff" stroke-width="0.70" opacity="0.8"/><path d="M640.0 80.2 L644.0 78.2" stroke="#fff" stroke-width="0.70" opacity="0.8"/><path d="M644.0 78.2 L648.0 76.2" stroke="#fff" stroke-width="0.70" opacity="0.8"/><path d="M648.0 76.2 L652.0 74.2" stroke="#fff" stroke-width="0.70" opacity="0.8"/><path d="M652.0 74.2 L656.0 72.4" stroke="#fff" stroke-width="0.70" opacity="0.8"/><path d="M656.0 72.4 L660.0 70.5" stroke="#fff" stroke-width="0.70" opacity="0.8"/><path d="M660.0 70.5 L664.0 68.7" stroke="#fff" stroke-width="0.70" opacity="0.8"/><path d="M664.0 68.7 L668.0 66.8" stroke="#fff" stroke-width="0.70" opacity="0.8"/><path d="M668.0 66.8 L672.0 65.1" stroke="#fff" stroke-width="0.70" opacity="0.8"/><path d="M672.0 65.1 L676.0 63.3" stroke="#fff" stroke-width="0.70" opacity="0.8"/><path d="M676.0 63.3 L680.0 61.6" stroke="#fff" stroke-width="0.70" opacity="0.8"/><path d="M680.0 61.6 L684.0 59.9" stroke="#fff" stroke-width="0.70" opacity="0.8"/><path d="M684.0 59.9 L688.0 58.2" stroke="#fff" stroke-width="0.70" opacity="0.8"/><path d="M688.0 58.2 L692.0 56.6" stroke="#fff" stroke-width="0.70" opacity="0.8"/><path d="M692.0 56.6 L696.0 55.2" stroke="#fff" stroke-width="0.70" opacity="0.8"/><path d="M696.0 55.2 L700.0 53.7" stroke="#fff" stroke-width="0.70" opacity="0.8"/><path d="M700.0 53.7 L704.0 52.2" stroke="#fff" stroke-width="0.70" opacity="0.8"/><path d="M704.0 52.2 L708.0 50.8" stroke="#fff" stroke-width="0.70" opacity="0.8"/><path d="M708.0 50.8 L712.0 49.5" stroke="#fff" stroke-width="0.70" opacity="0.8"/><path d="M712.0 49.5 L716.0 48.3" stroke="#fff" stroke-width="0.70" opacity="0.8"/><path d="M716.0 48.3 L720.0 47.2" stroke="#fff" stroke-width="0.70" opacity="0.8"/><path d="M720.0 47.2 L724.0 46.1" stroke="#fff" stroke-width="0.70" opacity="0.8"/><path d="M724.0 46.1 L728.0 45.2" stroke="#fff" stroke-width="0.70" opacity="0.8"/><path d="M728.0 45.2 L732.0 44.3" stroke="#fff" stroke-width="0.70" opacity="0.8"/><path d="M732.0 44.3 L736.0 43.5" stroke="#fff" stroke-width="0.70" opacity="0.8"/><path d="M736.0 43.5 L740.0 42.6" stroke="#fff" stroke-width="0.70" opacity="0.8"/><path d="M740.0 42.6 L744.0 41.7" stroke="#fff" stroke-width="0.70" opacity="0.8"/><path d="M744.0 41.7 L748.0 40.9" stroke="#fff" stroke-width="0.70" opacity="0.8"/><path d="M748.0 40.9 L752.0 40.1" stroke="#fff" stroke-width="0.70" opacity="0.8"/><path d="M752.0 40.1 L756.0 39.4" stroke="#fff" stroke-width="0.70" opacity="0.8"/><path d="M756.0 39.4 L760.0 38.8" stroke="#fff" stroke-width="0.70" opacity="0.8"/><path d="M760.0 38.8 L764.0 38.1" stroke="#fff" stroke-width="0.70" opacity="0.8"/><path d="M764.0 38.1 L768.0 37.5" stroke="#fff" stroke-width="0.70" opacity="0.8"/><path d="M768.0 37.5 L772.0 36.8" stroke="#fff" stroke-width="0.70" opacity="0.8"/><path d="M772.0 36.8 L776.0 36.2" stroke="#fff" stroke-width="0.70" opacity="0.8"/><path d="M776.0 36.2 L780.0 35.5" stroke="#fff" stroke-width="0.70" opacity="0.8"/><path d="M780.0 35.5 L784.0 34.9" stroke="#fff" stroke-width="0.70" opacity="0.8"/><path d="M784.0 34.9 L788.0 34.2" stroke="#fff" stroke-width="0.70" opacity="0.8"/><path d="M788.0 34.2 L792.0 33.7" stroke="#fff" stroke-width="0.70" opacity="0.8"/><path d="M792.0 33.7 L796.0 33.2" stroke="#fff" stroke-width="0.70" opacity="0.8"/><path d="M560.0 114.6 L564.0 113.1" stroke="#fff" stroke-width="0.70" opacity="0.8"/><path d="M564.0 113.1 L568.0 111.7" stroke="#fff" stroke-width="0.70" opacity="0.8"/><path d="M568.0 111.7 L572.0 110.2" stroke="#fff" stroke-width="0.70" opacity="0.8"/><path d="M572.0 110.2 L576.0 108.7" stroke="#fff" stroke-width="0.70" opacity="0.8"/><path d="M576.0 108.7 L580.0 107.2" stroke="#fff" stroke-width="0.70" opacity="0.8"/><path d="M580.0 107.2 L584.0 105.3" stroke="#fff" stroke-width="0.70" opacity="0.8"/><path d="M584.0 105.3 L588.0 103.3" stroke="#fff" stroke-width="0.70" opacity="0.8"/><path d="M588.0 103.3 L592.0 101.5" stroke="#fff" stroke-width="0.70" opacity="0.8"/><path d="M592.0 101.5 L596.0 99.9" stroke="#fff" stroke-width="0.70" opacity="0.8"/><path d="M596.0 99.9 L600.0 98.3" stroke="#fff" stroke-width="0.70" opacity="0.8"/><path d="M600.0 98.3 L604.0 96.7" stroke="#fff" stroke-width="0.70" opacity="0.8"/><path d="M604.0 96.7 L608.0 95.1" stroke="#fff" stroke-width="0.70" opacity="0.8"/><path d="M608.0 95.1 L612.0 93.4" stroke="#fff" stroke-width="0.70" opacity="0.8"/><path d="M612.0 93.4 L616.0 91.8" stroke="#fff" stroke-width="0.70" opacity="0.8"/><path d="M616.0 91.8 L620.0 90.1" stroke="#fff" stroke-width="0.70" opacity="0.8"/><path d="M620.0 90.1 L624.0 88.4" stroke="#fff" stroke-width="0.70" opacity="0.8"/><path d="M624.0 88.4 L628.0 86.7" stroke="#fff" stroke-width="0.70" opacity="0.8"/><path d="M628.0 86.7 L632.0 84.8" stroke="#fff" stroke-width="0.70" opacity="0.8"/><path d="M632.0 84.8 L636.0 82.8" stroke="#fff" stroke-width="0.70" opacity="0.8"/><path d="M636.0 82.8 L640.0 80.8" stroke="#fff" stroke-width="0.70" opacity="0.8"/><path d="M640.0 80.8 L644.0 78.8" stroke="#fff" stroke-width="0.70" opacity="0.8"/><path d="M644.0 78.8 L648.0 76.8" stroke="#fff" stroke-width="0.70" opacity="0.8"/><path d="M648.0 76.8 L652.0 74.9" stroke="#fff" stroke-width="0.70" opacity="0.8"/><path d="M652.0 74.9 L656.0 73.0" stroke="#fff" stroke-width="0.70" opacity="0.8"/><path d="M656.0 73.0 L660.0 71.2" stroke="#fff" stroke-width="0.70" opacity="0.8"/><path d="M660.0 71.2 L664.0 69.4" stroke="#fff" stroke-width="0.70" opacity="0.8"/><path d="M664.0 69.4 L668.0 67.6" stroke="#fff" stroke-width="0.70" opacity="0.8"/><path d="M668.0 67.6 L672.0 65.8" stroke="#fff" stroke-width="0.70" opacity="0.8"/><path d="M672.0 65.8 L676.0 64.1" stroke="#fff" stroke-width="0.70" opacity="0.8"/><path d="M676.0 64.1 L680.0 62.4" stroke="#fff" stroke-width="0.70" opacity="0.8"/><path d="M680.0 62.4 L684.0 60.7" stroke="#fff" stroke-width="0.70" opacity="0.8"/><path d="M684.0 60.7 L688.0 59.0" stroke="#fff" stroke-width="0.70" opacity="0.8"/><path d="M688.0 59.0 L692.0 57.4" stroke="#fff" stroke-width="0.70" opacity="0.8"/><path d="M692.0 57.4 L696.0 56.0" stroke="#fff" stroke-width="0.70" opacity="0.8"/><path d="M696.0 56.0 L700.0 54.5" stroke="#fff" stroke-width="0.70" opacity="0.8"/><path d="M700.0 54.5 L704.0 53.1" stroke="#fff" stroke-width="0.70" opacity="0.8"/><path d="M704.0 53.1 L708.0 51.6" stroke="#fff" stroke-width="0.70" opacity="0.8"/><path d="M708.0 51.6 L712.0 50.3" stroke="#fff" stroke-width="0.70" opacity="0.8"/><path d="M712.0 50.3 L716.0 49.3" stroke="#fff" stroke-width="0.70" opacity="0.8"/><path d="M716.0 49.3 L720.0 48.2" stroke="#fff" stroke-width="0.70" opacity="0.8"/><path d="M720.0 48.2 L724.0 47.1" stroke="#fff" stroke-width="0.70" opacity="0.8"/><path d="M724.0 47.1 L728.0 46.1" stroke="#fff" stroke-width="0.70" opacity="0.8"/><path d="M728.0 46.1 L732.0 45.3" stroke="#fff" stroke-width="0.70" opacity="0.8"/><path d="M732.0 45.3 L736.0 44.4" stroke="#fff" stroke-width="0.70" opacity="0.8"/><path d="M736.0 44.4 L740.0 43.6" stroke="#fff" stroke-width="0.70" opacity="0.8"/><path d="M740.0 43.6 L744.0 42.7" stroke="#fff" stroke-width="0.70" opacity="0.8"/><path d="M744.0 42.7 L748.0 41.9" stroke="#fff" stroke-width="0.70" opacity="0.8"/><path d="M748.0 41.9 L752.0 41.1" stroke="#fff" stroke-width="0.70" opacity="0.8"/><path d="M752.0 41.1 L756.0 40.5" stroke="#fff" stroke-width="0.70" opacity="0.8"/><path d="M756.0 40.5 L760.0 39.9" stroke="#fff" stroke-width="0.70" opacity="0.8"/><path d="M760.0 39.9 L764.0 39.2" stroke="#fff" stroke-width="0.70" opacity="0.8"/><path d="M764.0 39.2 L768.0 38.6" stroke="#fff" stroke-width="0.70" opacity="0.8"/><path d="M768.0 38.6 L772.0 37.9" stroke="#fff" stroke-width="0.70" opacity="0.8"/><path d="M772.0 37.9 L776.0 37.3" stroke="#fff" stroke-width="0.70" opacity="0.8"/><path d="M776.0 37.3 L780.0 36.7" stroke="#fff" stroke-width="0.70" opacity="0.8"/><path d="M780.0 36.7 L784.0 36.0" stroke="#fff" stroke-width="0.70" opacity="0.8"/><path d="M784.0 36.0 L788.0 35.4" stroke="#fff" stroke-width="0.70" opacity="0.8"/><path d="M788.0 35.4 L792.0 34.9" stroke="#fff" stroke-width="0.70" opacity="0.8"/><path d="M792.0 34.9 L796.0 34.4" stroke="#fff" stroke-width="0.70" opacity="0.8"/><path d="M560.0 114.9 L564.0 113.5" stroke="#fff" stroke-width="0.70" opacity="0.8"/><path d="M564.0 113.5 L568.0 112.0" stroke="#fff" stroke-width="0.70" opacity="0.8"/><path d="M568.0 112.0 L572.0 110.6" stroke="#fff" stroke-width="0.70" opacity="0.8"/><path d="M572.0 110.6 L576.0 109.1" stroke="#fff" stroke-width="0.70" opacity="0.8"/><path d="M576.0 109.1 L580.0 107.6" stroke="#fff" stroke-width="0.70" opacity="0.8"/><path d="M580.0 107.6 L584.0 105.8" stroke="#fff" stroke-width="0.70" opacity="0.8"/><path d="M584.0 105.8 L588.0 103.8" stroke="#fff" stroke-width="0.70" opacity="0.8"/><path d="M588.0 103.8 L592.0 102.0" stroke="#fff" stroke-width="0.70" opacity="0.8"/><path d="M592.0 102.0 L596.0 100.4" stroke="#fff" stroke-width="0.70" opacity="0.8"/><path d="M596.0 100.4 L600.0 98.8" stroke="#fff" stroke-width="0.70" opacity="0.8"/><path d="M600.0 98.8 L604.0 97.2" stroke="#fff" stroke-width="0.70" opacity="0.8"/><path d="M604.0 97.2 L608.0 95.6" stroke="#fff" stroke-width="0.70" opacity="0.8"/><path d="M608.0 95.6 L612.0 94.0" stroke="#fff" stroke-width="0.70" opacity="0.8"/><path d="M612.0 94.0 L616.0 92.3" stroke="#fff" stroke-width="0.70" opacity="0.8"/><path d="M616.0 92.3 L620.0 90.7" stroke="#fff" stroke-width="0.70" opacity="0.8"/><path d="M620.0 90.7 L624.0 89.0" stroke="#fff" stroke-width="0.70" opacity="0.8"/><path d="M624.0 89.0 L628.0 87.3" stroke="#fff" stroke-width="0.70" opacity="0.8"/><path d="M628.0 87.3 L632.0 85.5" stroke="#fff" stroke-width="0.70" opacity="0.8"/><path d="M632.0 85.5 L636.0 83.5" stroke="#fff" stroke-width="0.70" opacity="0.8"/><path d="M636.0 83.5 L640.0 81.5" stroke="#fff" stroke-width="0.70" opacity="0.8"/><path d="M640.0 81.5 L644.0 79.5" stroke="#fff" stroke-width="0.70" opacity="0.8"/><path d="M644.0 79.5 L648.0 77.5" stroke="#fff" stroke-width="0.70" opacity="0.8"/><path d="M648.0 77.5 L652.0 75.6" stroke="#fff" stroke-width="0.70" opacity="0.8"/><path d="M652.0 75.6 L656.0 73.8" stroke="#fff" stroke-width="0.70" opacity="0.8"/><path d="M656.0 73.8 L660.0 72.0" stroke="#fff" stroke-width="0.70" opacity="0.8"/><path d="M660.0 72.0 L664.0 70.2" stroke="#fff" stroke-width="0.70" opacity="0.8"/><path d="M664.0 70.2 L668.0 68.4" stroke="#fff" stroke-width="0.70" opacity="0.8"/><path d="M668.0 68.4 L672.0 66.6" stroke="#fff" stroke-width="0.70" opacity="0.8"/><path d="M672.0 66.6 L676.0 65.0" stroke="#fff" stroke-width="0.70" opacity="0.8"/><path d="M676.0 65.0 L680.0 63.3" stroke="#fff" stroke-width="0.70" opacity="0.8"/><path d="M680.0 63.3 L684.0 61.6" stroke="#fff" stroke-width="0.70" opacity="0.8"/><path d="M684.0 61.6 L688.0 59.9" stroke="#fff" stroke-width="0.70" opacity="0.8"/><path d="M688.0 59.9 L692.0 58.4" stroke="#fff" stroke-width="0.70" opacity="0.8"/><path d="M692.0 58.4 L696.0 57.0" stroke="#fff" stroke-width="0.70" opacity="0.8"/><path d="M696.0 57.0 L700.0 55.5" stroke="#fff" stroke-width="0.70" opacity="0.8"/><path d="M700.0 55.5 L704.0 54.1" stroke="#fff" stroke-width="0.70" opacity="0.8"/><path d="M704.0 54.1 L708.0 52.7" stroke="#fff" stroke-width="0.70" opacity="0.8"/><path d="M708.0 52.7 L712.0 51.4" stroke="#fff" stroke-width="0.70" opacity="0.8"/><path d="M712.0 51.4 L716.0 50.3" stroke="#fff" stroke-width="0.70" opacity="0.8"/><path d="M716.0 50.3 L720.0 49.2" stroke="#fff" stroke-width="0.70" opacity="0.8"/><path d="M720.0 49.2 L724.0 48.2" stroke="#fff" stroke-width="0.70" opacity="0.8"/><path d="M724.0 48.2 L728.0 47.3" stroke="#fff" stroke-width="0.70" opacity="0.8"/><path d="M728.0 47.3 L732.0 46.4" stroke="#fff" stroke-width="0.70" opacity="0.8"/><path d="M732.0 46.4 L736.0 45.6" stroke="#fff" stroke-width="0.70" opacity="0.8"/><path d="M736.0 45.6 L740.0 44.8" stroke="#fff" stroke-width="0.70" opacity="0.8"/><path d="M740.0 44.8 L744.0 43.9" stroke="#fff" stroke-width="0.70" opacity="0.8"/><path d="M744.0 43.9 L748.0 43.1" stroke="#fff" stroke-width="0.70" opacity="0.8"/><path d="M748.0 43.1 L752.0 42.4" stroke="#fff" stroke-width="0.70" opacity="0.8"/><path d="M752.0 42.4 L756.0 41.7" stroke="#fff" stroke-width="0.70" opacity="0.8"/><path d="M756.0 41.7 L760.0 41.1" stroke="#fff" stroke-width="0.70" opacity="0.8"/><path d="M760.0 41.1 L764.0 40.5" stroke="#fff" stroke-width="0.70" opacity="0.8"/><path d="M764.0 40.5 L768.0 39.9" stroke="#fff" stroke-width="0.70" opacity="0.8"/><path d="M768.0 39.9 L772.0 39.3" stroke="#fff" stroke-width="0.70" opacity="0.8"/><path d="M772.0 39.3 L776.0 38.7" stroke="#fff" stroke-width="0.70" opacity="0.8"/><path d="M776.0 38.7 L780.0 38.0" stroke="#fff" stroke-width="0.70" opacity="0.8"/><path d="M780.0 38.0 L784.0 37.4" stroke="#fff" stroke-width="0.70" opacity="0.8"/><path d="M784.0 37.4 L788.0 36.8" stroke="#fff" stroke-width="0.70" opacity="0.8"/><path d="M788.0 36.8 L792.0 36.3" stroke="#fff" stroke-width="0.70" opacity="0.8"/><path d="M792.0 36.3 L796.0 35.9" stroke="#fff" stroke-width="0.70" opacity="0.8"/><path d="M560.0 115.3 L564.0 113.9" stroke="#fff" stroke-width="0.70" opacity="0.8"/><path d="M564.0 113.9 L568.0 112.4" stroke="#fff" stroke-width="0.70" opacity="0.8"/><path d="M568.0 112.4 L572.0 111.0" stroke="#fff" stroke-width="0.70" opacity="0.8"/><path d="M572.0 111.0 L576.0 109.6" stroke="#fff" stroke-width="0.70" opacity="0.8"/><path d="M576.0 109.6 L580.0 108.1" stroke="#fff" stroke-width="0.70" opacity="0.8"/><path d="M580.0 108.1 L584.0 106.3" stroke="#fff" stroke-width="0.70" opacity="0.8"/><path d="M584.0 106.3 L588.0 104.3" stroke="#fff" stroke-width="0.70" opacity="0.8"/><path d="M588.0 104.3 L592.0 102.6" stroke="#fff" stroke-width="0.70" opacity="0.8"/><path d="M592.0 102.6 L596.0 101.0" stroke="#fff" stroke-width="0.70" opacity="0.8"/><path d="M596.0 101.0 L600.0 99.4" stroke="#fff" stroke-width="0.70" opacity="0.8"/><path d="M600.0 99.4 L604.0 97.8" stroke="#fff" stroke-width="0.70" opacity="0.8"/><path d="M604.0 97.8 L608.0 96.3" stroke="#fff" stroke-width="0.70" opacity="0.8"/><path d="M608.0 96.3 L612.0 94.7" stroke="#fff" stroke-width="0.70" opacity="0.8"/><path d="M612.0 94.7 L616.0 93.0" stroke="#fff" stroke-width="0.70" opacity="0.8"/><path d="M616.0 93.0 L620.0 91.4" stroke="#fff" stroke-width="0.70" opacity="0.8"/><path d="M620.0 91.4 L624.0 89.7" stroke="#fff" stroke-width="0.70" opacity="0.8"/><path d="M624.0 89.7 L628.0 88.1" stroke="#fff" stroke-width="0.70" opacity="0.8"/><path d="M628.0 88.1 L632.0 86.3" stroke="#fff" stroke-width="0.70" opacity="0.8"/><path d="M632.0 86.3 L636.0 84.3" stroke="#fff" stroke-width="0.70" opacity="0.8"/><path d="M636.0 84.3 L640.0 82.3" stroke="#fff" stroke-width="0.70" opacity="0.8"/><path d="M640.0 82.3 L644.0 80.4" stroke="#fff" stroke-width="0.70" opacity="0.8"/><path d="M644.0 80.4 L648.0 78.4" stroke="#fff" stroke-width="0.70" opacity="0.8"/><path d="M648.0 78.4 L652.0 76.5" stroke="#fff" stroke-width="0.70" opacity="0.8"/><path d="M652.0 76.5 L656.0 74.7" stroke="#fff" stroke-width="0.70" opacity="0.8"/><path d="M656.0 74.7 L660.0 72.9" stroke="#fff" stroke-width="0.70" opacity="0.8"/><path d="M660.0 72.9 L664.0 71.1" stroke="#fff" stroke-width="0.70" opacity="0.8"/><path d="M664.0 71.1 L668.0 69.3" stroke="#fff" stroke-width="0.70" opacity="0.8"/><path d="M668.0 69.3 L672.0 67.6" stroke="#fff" stroke-width="0.70" opacity="0.8"/><path d="M672.0 67.6 L676.0 66.0" stroke="#fff" stroke-width="0.70" opacity="0.8"/><path d="M676.0 66.0 L680.0 64.3" stroke="#fff" stroke-width="0.70" opacity="0.8"/><path d="M680.0 64.3 L684.0 62.7" stroke="#fff" stroke-width="0.70" opacity="0.8"/><path d="M684.0 62.7 L688.0 61.0" stroke="#fff" stroke-width="0.70" opacity="0.8"/><path d="M688.0 61.0 L692.0 59.5" stroke="#fff" stroke-width="0.70" opacity="0.8"/><path d="M692.0 59.5 L696.0 58.1" stroke="#fff" stroke-width="0.70" opacity="0.8"/><path d="M696.0 58.1 L700.0 56.6" stroke="#fff" stroke-width="0.70" opacity="0.8"/><path d="M700.0 56.6 L704.0 55.2" stroke="#fff" stroke-width="0.70" opacity="0.8"/><path d="M704.0 55.2 L708.0 53.8" stroke="#fff" stroke-width="0.70" opacity="0.8"/><path d="M708.0 53.8 L712.0 52.6" stroke="#fff" stroke-width="0.70" opacity="0.8"/><path d="M712.0 52.6 L716.0 51.5" stroke="#fff" stroke-width="0.70" opacity="0.8"/><path d="M716.0 51.5 L720.0 50.5" stroke="#fff" stroke-width="0.70" opacity="0.8"/><path d="M720.0 50.5 L724.0 49.4" stroke="#fff" stroke-width="0.70" opacity="0.8"/><path d="M724.0 49.4 L728.0 48.5" stroke="#fff" stroke-width="0.70" opacity="0.8"/><path d="M728.0 48.5 L732.0 47.7" stroke="#fff" stroke-width="0.70" opacity="0.8"/><path d="M732.0 47.7 L736.0 46.9" stroke="#fff" stroke-width="0.70" opacity="0.8"/><path d="M736.0 46.9 L740.0 46.1" stroke="#fff" stroke-width="0.70" opacity="0.8"/><path d="M740.0 46.1 L744.0 45.3" stroke="#fff" stroke-width="0.70" opacity="0.8"/><path d="M744.0 45.3 L748.0 44.5" stroke="#fff" stroke-width="0.70" opacity="0.8"/><path d="M748.0 44.5 L752.0 43.8" stroke="#fff" stroke-width="0.70" opacity="0.8"/><path d="M752.0 43.8 L756.0 43.2" stroke="#fff" stroke-width="0.70" opacity="0.8"/><path d="M756.0 43.2 L760.0 42.6" stroke="#fff" stroke-width="0.70" opacity="0.8"/><path d="M760.0 42.6 L764.0 42.0" stroke="#fff" stroke-width="0.70" opacity="0.8"/><path d="M764.0 42.0 L768.0 41.4" stroke="#fff" stroke-width="0.70" opacity="0.8"/><path d="M768.0 41.4 L772.0 40.8" stroke="#fff" stroke-width="0.70" opacity="0.8"/><path d="M772.0 40.8 L776.0 40.2" stroke="#fff" stroke-width="0.70" opacity="0.8"/><path d="M776.0 40.2 L780.0 39.6" stroke="#fff" stroke-width="0.70" opacity="0.8"/><path d="M780.0 39.6 L784.0 39.0" stroke="#fff" stroke-width="0.70" opacity="0.8"/><path d="M784.0 39.0 L788.0 38.4" stroke="#fff" stroke-width="0.70" opacity="0.8"/><path d="M788.0 38.4 L792.0 37.9" stroke="#fff" stroke-width="0.70" opacity="0.8"/><path d="M792.0 37.9 L796.0 37.5" stroke="#fff" stroke-width="0.70" opacity="0.8"/><path d="M533.5 125.0 L535.9 122.0" stroke="#fff" stroke-width="0.50" opacity="0.95"/><path d="M543.9 125.0 L546.1 122.0" stroke="#fff" stroke-width="0.81" opacity="0.95"/><path d="M546.1 122.0 L548.4 119.0" stroke="#fff" stroke-width="0.59" opacity="0.95"/><path d="M555.2 125.0 L557.4 122.0" stroke="#fff" stroke-width="1.20" opacity="0.95"/><path d="M557.4 122.0 L559.6 119.0" stroke="#fff" stroke-width="0.98" opacity="0.95"/><path d="M559.6 119.0 L561.8 116.0" stroke="#fff" stroke-width="0.76" opacity="0.95"/><path d="M561.8 116.0 L564.1 113.0" stroke="#fff" stroke-width="0.54" opacity="0.95"/><path d="M567.6 125.0 L569.7 122.0" stroke="#fff" stroke-width="1.66" opacity="0.95"/><path d="M569.7 122.0 L571.9 119.0" stroke="#fff" stroke-width="1.44" opacity="0.95"/><path d="M571.9 119.0 L574.0 116.0" stroke="#fff" stroke-width="1.22" opacity="0.95"/><path d="M574.0 116.0 L576.2 113.0" stroke="#fff" stroke-width="1.00" opacity="0.95"/><path d="M576.2 113.0 L578.3 110.0" stroke="#fff" stroke-width="0.78" opacity="0.95"/><path d="M578.3 110.0 L580.5 107.0" stroke="#fff" stroke-width="0.57" opacity="0.95"/><path d="M581.0 125.0 L583.1 122.0" stroke="#fff" stroke-width="2.10" opacity="0.95"/><path d="M583.1 122.0 L585.1 119.0" stroke="#fff" stroke-width="1.99" opacity="0.95"/><path d="M585.1 119.0 L587.2 116.0" stroke="#fff" stroke-width="1.80" opacity="0.95"/><path d="M587.2 116.0 L589.3 113.0" stroke="#fff" stroke-width="1.60" opacity="0.95"/><path d="M589.3 113.0 L591.4 110.0" stroke="#fff" stroke-width="1.40" opacity="0.95"/><path d="M591.4 110.0 L593.5 107.0" stroke="#fff" stroke-width="1.18" opacity="0.95"/><path d="M593.5 107.0 L595.6 104.0" stroke="#fff" stroke-width="0.97" opacity="0.95"/><path d="M595.6 104.0 L597.7 101.0" stroke="#fff" stroke-width="0.75" opacity="0.95"/><path d="M597.7 101.0 L599.8 98.0" stroke="#fff" stroke-width="0.54" opacity="0.95"/><path d="M595.4 125.0 L597.4 122.0" stroke="#fff" stroke-width="2.10" opacity="0.95"/><path d="M597.4 122.0 L599.4 119.0" stroke="#fff" stroke-width="2.10" opacity="0.95"/><path d="M599.4 119.0 L601.5 116.0" stroke="#fff" stroke-width="2.10" opacity="0.95"/><path d="M601.5 116.0 L603.5 113.0" stroke="#fff" stroke-width="2.10" opacity="0.95"/><path d="M603.5 113.0 L605.5 110.0" stroke="#fff" stroke-width="1.97" opacity="0.95"/><path d="M605.5 110.0 L607.5 107.0" stroke="#fff" stroke-width="1.76" opacity="0.95"/><path d="M607.5 107.0 L609.5 104.0" stroke="#fff" stroke-width="1.54" opacity="0.95"/><path d="M609.5 104.0 L611.5 101.0" stroke="#fff" stroke-width="1.33" opacity="0.95"/><path d="M611.5 101.0 L613.5 98.0" stroke="#fff" stroke-width="1.11" opacity="0.95"/><path d="M613.5 98.0 L615.6 95.0" stroke="#fff" stroke-width="0.90" opacity="0.95"/><path d="M615.6 95.0 L617.6 92.0" stroke="#fff" stroke-width="0.68" opacity="0.95"/><path d="M617.6 92.0 L619.6 89.0" stroke="#fff" stroke-width="0.50" opacity="0.95"/><path d="M610.9 125.0 L612.8 122.0" stroke="#fff" stroke-width="2.10" opacity="0.95"/><path d="M612.8 122.0 L614.8 119.0" stroke="#fff" stroke-width="2.10" opacity="0.95"/><path d="M614.8 119.0 L616.7 116.0" stroke="#fff" stroke-width="2.10" opacity="0.95"/><path d="M616.7 116.0 L618.6 113.0" stroke="#fff" stroke-width="2.10" opacity="0.95"/><path d="M618.6 113.0 L620.6 110.0" stroke="#fff" stroke-width="2.10" opacity="0.95"/><path d="M620.6 110.0 L622.5 107.0" stroke="#fff" stroke-width="2.10" opacity="0.95"/><path d="M622.5 107.0 L624.4 104.0" stroke="#fff" stroke-width="2.10" opacity="0.95"/><path d="M624.4 104.0 L626.4 101.0" stroke="#fff" stroke-width="1.96" opacity="0.95"/><path d="M626.4 101.0 L628.3 98.0" stroke="#fff" stroke-width="1.75" opacity="0.95"/><path d="M628.3 98.0 L630.2 95.0" stroke="#fff" stroke-width="1.53" opacity="0.95"/><path d="M630.2 95.0 L632.2 92.0" stroke="#fff" stroke-width="1.33" opacity="0.95"/><path d="M632.2 92.0 L634.1 89.0" stroke="#fff" stroke-width="1.13" opacity="0.95"/><path d="M634.1 89.0 L636.1 86.0" stroke="#fff" stroke-width="0.93" opacity="0.95"/><path d="M636.1 86.0 L638.0 83.0" stroke="#fff" stroke-width="0.72" opacity="0.95"/><path d="M638.0 83.0 L639.9 80.0" stroke="#fff" stroke-width="0.52" opacity="0.95"/><path d="M628.4 125.0 L630.3 122.0" stroke="#fff" stroke-width="2.10" opacity="0.95"/><path d="M630.3 122.0 L632.1 119.0" stroke="#fff" stroke-width="2.10" opacity="0.95"/><path d="M632.1 119.0 L634.0 116.0" stroke="#fff" stroke-width="2.10" opacity="0.95"/><path d="M634.0 116.0 L635.8 113.0" stroke="#fff" stroke-width="2.10" opacity="0.95"/><path d="M635.8 113.0 L637.7 110.0" stroke="#fff" stroke-width="2.10" opacity="0.95"/><path d="M637.7 110.0 L639.5 107.0" stroke="#fff" stroke-width="2.10" opacity="0.95"/><path d="M639.5 107.0 L641.3 104.0" stroke="#fff" stroke-width="2.10" opacity="0.95"/><path d="M641.3 104.0 L643.2 101.0" stroke="#fff" stroke-width="2.10" opacity="0.95"/><path d="M643.2 101.0 L645.0 98.0" stroke="#fff" stroke-width="2.10" opacity="0.95"/><path d="M645.0 98.0 L646.9 95.0" stroke="#fff" stroke-width="2.10" opacity="0.95"/><path d="M646.9 95.0 L648.7 92.0" stroke="#fff" stroke-width="2.10" opacity="0.95"/><path d="M648.7 92.0 L650.6 89.0" stroke="#fff" stroke-width="1.96" opacity="0.95"/><path d="M650.6 89.0 L652.4 86.0" stroke="#fff" stroke-width="1.75" opacity="0.95"/><path d="M652.4 86.0 L654.3 83.0" stroke="#fff" stroke-width="1.54" opacity="0.95"/><path d="M654.3 83.0 L656.1 80.0" stroke="#fff" stroke-width="1.32" opacity="0.95"/><path d="M656.1 80.0 L658.0 77.0" stroke="#fff" stroke-width="1.11" opacity="0.95"/><path d="M658.0 77.0 L659.8 74.0" stroke="#fff" stroke-width="0.90" opacity="0.95"/><path d="M659.8 74.0 L661.7 71.0" stroke="#fff" stroke-width="0.68" opacity="0.95"/><path d="M661.7 71.0 L663.5 68.0" stroke="#fff" stroke-width="0.50" opacity="0.95"/><path d="M648.5 125.0 L650.3 122.0" stroke="#fff" stroke-width="2.10" opacity="0.95"/><path d="M650.3 122.0 L652.0 119.0" stroke="#fff" stroke-width="2.10" opacity="0.95"/><path d="M652.0 119.0 L653.8 116.0" stroke="#fff" stroke-width="2.10" opacity="0.95"/><path d="M653.8 116.0 L655.5 113.0" stroke="#fff" stroke-width="2.10" opacity="0.95"/><path d="M655.5 113.0 L657.3 110.0" stroke="#fff" stroke-width="2.10" opacity="0.95"/><path d="M657.3 110.0 L659.0 107.0" stroke="#fff" stroke-width="2.10" opacity="0.95"/><path d="M659.0 107.0 L660.7 104.0" stroke="#fff" stroke-width="2.10" opacity="0.95"/><path d="M660.7 104.0 L662.5 101.0" stroke="#fff" stroke-width="2.10" opacity="0.95"/><path d="M662.5 101.0 L664.2 98.0" stroke="#fff" stroke-width="2.10" opacity="0.95"/><path d="M664.2 98.0 L666.0 95.0" stroke="#fff" stroke-width="2.10" opacity="0.95"/><path d="M666.0 95.0 L667.7 92.0" stroke="#fff" stroke-width="2.10" opacity="0.95"/><path d="M667.7 92.0 L669.5 89.0" stroke="#fff" stroke-width="2.10" opacity="0.95"/><path d="M669.5 89.0 L671.2 86.0" stroke="#fff" stroke-width="2.10" opacity="0.95"/><path d="M671.2 86.0 L673.0 83.0" stroke="#fff" stroke-width="2.10" opacity="0.95"/><path d="M673.0 83.0 L674.7 80.0" stroke="#fff" stroke-width="2.10" opacity="0.95"/><path d="M674.7 80.0 L676.5 77.0" stroke="#fff" stroke-width="1.95" opacity="0.95"/><path d="M676.5 77.0 L678.2 74.0" stroke="#fff" stroke-width="1.72" opacity="0.95"/><path d="M678.2 74.0 L680.0 71.0" stroke="#fff" stroke-width="1.50" opacity="0.95"/><path d="M680.0 71.0 L681.7 68.0" stroke="#fff" stroke-width="1.27" opacity="0.95"/><path d="M681.7 68.0 L683.5 65.0" stroke="#fff" stroke-width="1.05" opacity="0.95"/><path d="M683.5 65.0 L685.2 62.0" stroke="#fff" stroke-width="0.82" opacity="0.95"/><path d="M685.2 62.0 L687.0 59.0" stroke="#fff" stroke-width="0.60" opacity="0.95"/><path d="M669.7 125.0 L671.3 122.0" stroke="#fff" stroke-width="2.10" opacity="0.95"/><path d="M671.3 122.0 L672.9 119.0" stroke="#fff" stroke-width="2.10" opacity="0.95"/><path d="M672.9 119.0 L674.6 116.0" stroke="#fff" stroke-width="2.10" opacity="0.95"/><path d="M674.6 116.0 L676.2 113.0" stroke="#fff" stroke-width="2.10" opacity="0.95"/><path d="M676.2 113.0 L677.9 110.0" stroke="#fff" stroke-width="2.10" opacity="0.95"/><path d="M677.9 110.0 L679.5 107.0" stroke="#fff" stroke-width="2.10" opacity="0.95"/><path d="M679.5 107.0 L681.1 104.0" stroke="#fff" stroke-width="2.10" opacity="0.95"/><path d="M681.1 104.0 L682.8 101.0" stroke="#fff" stroke-width="2.10" opacity="0.95"/><path d="M682.8 101.0 L684.4 98.0" stroke="#fff" stroke-width="2.10" opacity="0.95"/><path d="M684.4 98.0 L686.1 95.0" stroke="#fff" stroke-width="2.10" opacity="0.95"/><path d="M686.1 95.0 L687.7 92.0" stroke="#fff" stroke-width="2.10" opacity="0.95"/><path d="M687.7 92.0 L689.3 89.0" stroke="#fff" stroke-width="2.10" opacity="0.95"/><path d="M689.3 89.0 L691.0 86.0" stroke="#fff" stroke-width="2.10" opacity="0.95"/><path d="M691.0 86.0 L692.6 83.0" stroke="#fff" stroke-width="2.10" opacity="0.95"/><path d="M692.6 83.0 L694.3 80.0" stroke="#fff" stroke-width="2.10" opacity="0.95"/><path d="M694.3 80.0 L695.9 77.0" stroke="#fff" stroke-width="2.10" opacity="0.95"/><path d="M695.9 77.0 L697.5 74.0" stroke="#fff" stroke-width="2.10" opacity="0.95"/><path d="M697.5 74.0 L699.2 71.0" stroke="#fff" stroke-width="2.10" opacity="0.95"/><path d="M699.2 71.0 L700.8 68.0" stroke="#fff" stroke-width="2.03" opacity="0.95"/><path d="M700.8 68.0 L702.5 65.0" stroke="#fff" stroke-width="1.79" opacity="0.95"/><path d="M702.5 65.0 L704.1 62.0" stroke="#fff" stroke-width="1.55" opacity="0.95"/><path d="M704.1 62.0 L705.7 59.0" stroke="#fff" stroke-width="1.31" opacity="0.95"/><path d="M705.7 59.0 L707.4 56.0" stroke="#fff" stroke-width="1.07" opacity="0.95"/><path d="M707.4 56.0 L709.0 53.0" stroke="#fff" stroke-width="0.83" opacity="0.95"/><path d="M709.0 53.0 L710.7 50.0" stroke="#fff" stroke-width="0.59" opacity="0.95"/><path d="M691.8 125.0 L693.4 122.0" stroke="#fff" stroke-width="2.10" opacity="0.95"/><path d="M693.4 122.0 L694.9 119.0" stroke="#fff" stroke-width="2.10" opacity="0.95"/><path d="M694.9 119.0 L696.4 116.0" stroke="#fff" stroke-width="2.10" opacity="0.95"/><path d="M696.4 116.0 L697.9 113.0" stroke="#fff" stroke-width="2.10" opacity="0.95"/><path d="M697.9 113.0 L699.5 110.0" stroke="#fff" stroke-width="2.10" opacity="0.95"/><path d="M699.5 110.0 L701.0 107.0" stroke="#fff" stroke-width="2.10" opacity="0.95"/><path d="M701.0 107.0 L702.5 104.0" stroke="#fff" stroke-width="2.10" opacity="0.95"/><path d="M702.5 104.0 L704.1 101.0" stroke="#fff" stroke-width="2.10" opacity="0.95"/><path d="M704.1 101.0 L705.6 98.0" stroke="#fff" stroke-width="2.10" opacity="0.95"/><path d="M705.6 98.0 L707.1 95.0" stroke="#fff" stroke-width="2.10" opacity="0.95"/><path d="M707.1 95.0 L708.6 92.0" stroke="#fff" stroke-width="2.10" opacity="0.95"/><path d="M708.6 92.0 L710.2 89.0" stroke="#fff" stroke-width="2.10" opacity="0.95"/><path d="M710.2 89.0 L711.7 86.0" stroke="#fff" stroke-width="2.10" opacity="0.95"/><path d="M711.7 86.0 L713.2 83.0" stroke="#fff" stroke-width="2.10" opacity="0.95"/><path d="M713.2 83.0 L714.8 80.0" stroke="#fff" stroke-width="2.10" opacity="0.95"/><path d="M714.8 80.0 L716.3 77.0" stroke="#fff" stroke-width="2.10" opacity="0.95"/><path d="M716.3 77.0 L717.8 74.0" stroke="#fff" stroke-width="2.10" opacity="0.95"/><path d="M717.8 74.0 L719.3 71.0" stroke="#fff" stroke-width="2.10" opacity="0.95"/><path d="M719.3 71.0 L720.9 68.0" stroke="#fff" stroke-width="2.10" opacity="0.95"/><path d="M720.9 68.0 L722.4 65.0" stroke="#fff" stroke-width="2.10" opacity="0.95"/><path d="M722.4 65.0 L723.9 62.0" stroke="#fff" stroke-width="2.10" opacity="0.95"/><path d="M723.9 62.0 L725.5 59.0" stroke="#fff" stroke-width="1.90" opacity="0.95"/><path d="M725.5 59.0 L727.0 56.0" stroke="#fff" stroke-width="1.64" opacity="0.95"/><path d="M727.0 56.0 L728.5 53.0" stroke="#fff" stroke-width="1.37" opacity="0.95"/><path d="M728.5 53.0 L730.0 50.0" stroke="#fff" stroke-width="1.11" opacity="0.95"/><path d="M730.0 50.0 L731.6 47.0" stroke="#fff" stroke-width="0.84" opacity="0.95"/><path d="M731.6 47.0 L733.1 44.0" stroke="#fff" stroke-width="0.57" opacity="0.95"/><path d="M713.5 125.0 L714.9 122.0" stroke="#fff" stroke-width="2.10" opacity="0.95"/><path d="M714.9 122.0 L716.3 119.0" stroke="#fff" stroke-width="2.10" opacity="0.95"/><path d="M716.3 119.0 L717.7 116.0" stroke="#fff" stroke-width="2.10" opacity="0.95"/><path d="M717.7 116.0 L719.2 113.0" stroke="#fff" stroke-width="2.10" opacity="0.95"/><path d="M719.2 113.0 L720.6 110.0" stroke="#fff" stroke-width="2.10" opacity="0.95"/><path d="M720.6 110.0 L722.0 107.0" stroke="#fff" stroke-width="2.10" opacity="0.95"/><path d="M722.0 107.0 L723.4 104.0" stroke="#fff" stroke-width="2.10" opacity="0.95"/><path d="M723.4 104.0 L724.8 101.0" stroke="#fff" stroke-width="2.10" opacity="0.95"/><path d="M724.8 101.0 L726.3 98.0" stroke="#fff" stroke-width="2.10" opacity="0.95"/><path d="M726.3 98.0 L727.7 95.0" stroke="#fff" stroke-width="2.10" opacity="0.95"/><path d="M727.7 95.0 L729.1 92.0" stroke="#fff" stroke-width="2.10" opacity="0.95"/><path d="M729.1 92.0 L730.5 89.0" stroke="#fff" stroke-width="2.10" opacity="0.95"/><path d="M730.5 89.0 L731.9 86.0" stroke="#fff" stroke-width="2.10" opacity="0.95"/><path d="M731.9 86.0 L733.4 83.0" stroke="#fff" stroke-width="2.10" opacity="0.95"/><path d="M733.4 83.0 L734.8 80.0" stroke="#fff" stroke-width="2.10" opacity="0.95"/><path d="M734.8 80.0 L736.2 77.0" stroke="#fff" stroke-width="2.10" opacity="0.95"/><path d="M736.2 77.0 L737.6 74.0" stroke="#fff" stroke-width="2.10" opacity="0.95"/><path d="M737.6 74.0 L739.0 71.0" stroke="#fff" stroke-width="2.10" opacity="0.95"/><path d="M739.0 71.0 L740.5 68.0" stroke="#fff" stroke-width="2.10" opacity="0.95"/><path d="M740.5 68.0 L741.9 65.0" stroke="#fff" stroke-width="2.10" opacity="0.95"/><path d="M741.9 65.0 L743.3 62.0" stroke="#fff" stroke-width="2.10" opacity="0.95"/><path d="M743.3 62.0 L744.7 59.0" stroke="#fff" stroke-width="2.10" opacity="0.95"/><path d="M744.7 59.0 L746.1 56.0" stroke="#fff" stroke-width="2.06" opacity="0.95"/><path d="M746.1 56.0 L747.5 53.0" stroke="#fff" stroke-width="1.79" opacity="0.95"/><path d="M747.5 53.0 L749.0 50.0" stroke="#fff" stroke-width="1.52" opacity="0.95"/><path d="M749.0 50.0 L750.4 47.0" stroke="#fff" stroke-width="1.25" opacity="0.95"/><path d="M750.4 47.0 L751.8 44.0" stroke="#fff" stroke-width="0.98" opacity="0.95"/><path d="M751.8 44.0 L753.2 41.0" stroke="#fff" stroke-width="0.70" opacity="0.95"/><path d="M753.2 41.0 L754.6 38.0" stroke="#fff" stroke-width="0.50" opacity="0.95"/><path d="M736.2 125.0 L737.5 122.0" stroke="#fff" stroke-width="2.10" opacity="0.95"/><path d="M737.5 122.0 L738.8 119.0" stroke="#fff" stroke-width="2.10" opacity="0.95"/><path d="M738.8 119.0 L740.1 116.0" stroke="#fff" stroke-width="2.10" opacity="0.95"/><path d="M740.1 116.0 L741.4 113.0" stroke="#fff" stroke-width="2.10" opacity="0.95"/><path d="M741.4 113.0 L742.7 110.0" stroke="#fff" stroke-width="2.10" opacity="0.95"/><path d="M742.7 110.0 L744.0 107.0" stroke="#fff" stroke-width="2.10" opacity="0.95"/><path d="M744.0 107.0 L745.3 104.0" stroke="#fff" stroke-width="2.10" opacity="0.95"/><path d="M745.3 104.0 L746.6 101.0" stroke="#fff" stroke-width="2.10" opacity="0.95"/><path d="M746.6 101.0 L747.9 98.0" stroke="#fff" stroke-width="2.10" opacity="0.95"/><path d="M747.9 98.0 L749.2 95.0" stroke="#fff" stroke-width="2.10" opacity="0.95"/><path d="M749.2 95.0 L750.5 92.0" stroke="#fff" stroke-width="2.10" opacity="0.95"/><path d="M750.5 92.0 L751.8 89.0" stroke="#fff" stroke-width="2.10" opacity="0.95"/><path d="M751.8 89.0 L753.1 86.0" stroke="#fff" stroke-width="2.10" opacity="0.95"/><path d="M753.1 86.0 L754.4 83.0" stroke="#fff" stroke-width="2.10" opacity="0.95"/><path d="M754.4 83.0 L755.7 80.0" stroke="#fff" stroke-width="2.10" opacity="0.95"/><path d="M755.7 80.0 L757.1 77.0" stroke="#fff" stroke-width="2.10" opacity="0.95"/><path d="M757.1 77.0 L758.4 74.0" stroke="#fff" stroke-width="2.10" opacity="0.95"/><path d="M758.4 74.0 L759.7 71.0" stroke="#fff" stroke-width="2.10" opacity="0.95"/><path d="M759.7 71.0 L761.0 68.0" stroke="#fff" stroke-width="2.10" opacity="0.95"/><path d="M761.0 68.0 L762.3 65.0" stroke="#fff" stroke-width="2.10" opacity="0.95"/><path d="M762.3 65.0 L763.6 62.0" stroke="#fff" stroke-width="2.10" opacity="0.95"/><path d="M763.6 62.0 L764.9 59.0" stroke="#fff" stroke-width="2.10" opacity="0.95"/><path d="M764.9 59.0 L766.2 56.0" stroke="#fff" stroke-width="2.10" opacity="0.95"/><path d="M766.2 56.0 L767.5 53.0" stroke="#fff" stroke-width="2.10" opacity="0.95"/><path d="M767.5 53.0 L768.8 50.0" stroke="#fff" stroke-width="1.86" opacity="0.95"/><path d="M768.8 50.0 L770.1 47.0" stroke="#fff" stroke-width="1.58" opacity="0.95"/><path d="M770.1 47.0 L771.4 44.0" stroke="#fff" stroke-width="1.30" opacity="0.95"/><path d="M771.4 44.0 L772.7 41.0" stroke="#fff" stroke-width="1.02" opacity="0.95"/><path d="M772.7 41.0 L774.0 38.0" stroke="#fff" stroke-width="0.75" opacity="0.95"/><path d="M774.0 38.0 L775.3 35.0" stroke="#fff" stroke-width="0.50" opacity="0.95"/><path d="M758.3 125.0 L759.5 122.0" stroke="#fff" stroke-width="2.10" opacity="0.95"/><path d="M759.5 122.0 L760.7 119.0" stroke="#fff" stroke-width="2.10" opacity="0.95"/><path d="M760.7 119.0 L761.9 116.0" stroke="#fff" stroke-width="2.10" opacity="0.95"/><path d="M761.9 116.0 L763.1 113.0" stroke="#fff" stroke-width="2.10" opacity="0.95"/><path d="M763.1 113.0 L764.3 110.0" stroke="#fff" stroke-width="2.10" opacity="0.95"/><path d="M764.3 110.0 L765.5 107.0" stroke="#fff" stroke-width="2.10" opacity="0.95"/><path d="M765.5 107.0 L766.7 104.0" stroke="#fff" stroke-width="2.10" opacity="0.95"/><path d="M766.7 104.0 L767.9 101.0" stroke="#fff" stroke-width="2.10" opacity="0.95"/><path d="M767.9 101.0 L769.1 98.0" stroke="#fff" stroke-width="2.10" opacity="0.95"/><path d="M769.1 98.0 L770.3 95.0" stroke="#fff" stroke-width="2.10" opacity="0.95"/><path d="M770.3 95.0 L771.5 92.0" stroke="#fff" stroke-width="2.10" opacity="0.95"/><path d="M771.5 92.0 L772.7 89.0" stroke="#fff" stroke-width="2.10" opacity="0.95"/><path d="M772.7 89.0 L773.9 86.0" stroke="#fff" stroke-width="2.10" opacity="0.95"/><path d="M773.9 86.0 L775.0 83.0" stroke="#fff" stroke-width="2.10" opacity="0.95"/><path d="M775.0 83.0 L776.2 80.0" stroke="#fff" stroke-width="2.10" opacity="0.95"/><path d="M776.2 80.0 L777.4 77.0" stroke="#fff" stroke-width="2.10" opacity="0.95"/><path d="M777.4 77.0 L778.6 74.0" stroke="#fff" stroke-width="2.10" opacity="0.95"/><path d="M778.6 74.0 L779.8 71.0" stroke="#fff" stroke-width="2.10" opacity="0.95"/><path d="M779.8 71.0 L781.0 68.0" stroke="#fff" stroke-width="2.10" opacity="0.95"/><path d="M781.0 68.0 L782.2 65.0" stroke="#fff" stroke-width="2.10" opacity="0.95"/><path d="M782.2 65.0 L783.4 62.0" stroke="#fff" stroke-width="2.10" opacity="0.95"/><path d="M783.4 62.0 L784.6 59.0" stroke="#fff" stroke-width="2.10" opacity="0.95"/><path d="M784.6 59.0 L785.8 56.0" stroke="#fff" stroke-width="2.10" opacity="0.95"/><path d="M785.8 56.0 L787.0 53.0" stroke="#fff" stroke-width="2.10" opacity="0.95"/><path d="M787.0 53.0 L788.2 50.0" stroke="#fff" stroke-width="2.10" opacity="0.95"/><path d="M788.2 50.0 L789.4 47.0" stroke="#fff" stroke-width="1.90" opacity="0.95"/><path d="M789.4 47.0 L790.6 44.0" stroke="#fff" stroke-width="1.62" opacity="0.95"/><path d="M790.6 44.0 L791.8 41.0" stroke="#fff" stroke-width="1.33" opacity="0.95"/><path d="M791.8 41.0 L792.9 38.0" stroke="#fff" stroke-width="1.05" opacity="0.95"/><path d="M792.9 38.0 L794.1 35.0" stroke="#fff" stroke-width="0.76" opacity="0.95"/><path d="M794.1 35.0 L795.3 32.0" stroke="#fff" stroke-width="0.50" opacity="0.95"/><path d="M780.5 125.0 L781.6 122.0" stroke="#fff" stroke-width="2.10" opacity="0.95"/><path d="M781.6 122.0 L782.7 119.0" stroke="#fff" stroke-width="2.10" opacity="0.95"/><path d="M782.7 119.0 L783.8 116.0" stroke="#fff" stroke-width="2.10" opacity="0.95"/><path d="M783.8 116.0 L784.8 113.0" stroke="#fff" stroke-width="2.10" opacity="0.95"/><path d="M784.8 113.0 L785.9 110.0" stroke="#fff" stroke-width="2.10" opacity="0.95"/><path d="M785.9 110.0 L787.0 107.0" stroke="#fff" stroke-width="2.10" opacity="0.95"/><path d="M787.0 107.0 L788.1 104.0" stroke="#fff" stroke-width="2.10" opacity="0.95"/><path d="M788.1 104.0 L789.2 101.0" stroke="#fff" stroke-width="2.10" opacity="0.95"/><path d="M789.2 101.0 L790.2 98.0" stroke="#fff" stroke-width="2.10" opacity="0.95"/><path d="M790.2 98.0 L791.3 95.0" stroke="#fff" stroke-width="2.10" opacity="0.95"/><path d="M791.3 95.0 L792.4 92.0" stroke="#fff" stroke-width="2.10" opacity="0.95"/><path d="M792.4 92.0 L793.5 89.0" stroke="#fff" stroke-width="2.10" opacity="0.95"/><path d="M793.5 89.0 L794.6 86.0" stroke="#fff" stroke-width="2.10" opacity="0.95"/><path d="M794.6 86.0 L795.7 83.0" stroke="#fff" stroke-width="2.10" opacity="0.95"/><path d="M795.7 83.0 L796.7 80.0" stroke="#fff" stroke-width="2.10" opacity="0.95"/><path d="M796.7 80.0 L797.8 77.0" stroke="#fff" stroke-width="2.10" opacity="0.95"/><path d="M797.8 77.0 L798.9 74.0" stroke="#fff" stroke-width="2.10" opacity="0.95"/><path d="M798.9 74.0 L800.0 71.0" stroke="#fff" stroke-width="2.10" opacity="0.95"/><path d="M800.0 71.0 L801.1 68.0" stroke="#fff" stroke-width="2.10" opacity="0.95"/><path d="M801.1 68.0 L802.1 65.0" stroke="#fff" stroke-width="2.10" opacity="0.95"/><path d="M802.1 65.0 L803.2 62.0" stroke="#fff" stroke-width="2.10" opacity="0.95"/><path d="M803.2 62.0 L804.3 59.0" stroke="#fff" stroke-width="2.10" opacity="0.95"/><path d="M804.3 59.0 L805.4 56.0" stroke="#fff" stroke-width="2.10" opacity="0.95"/><path d="M805.4 56.0 L806.5 53.0" stroke="#fff" stroke-width="2.10" opacity="0.95"/><path d="M806.5 53.0 L807.5 50.0" stroke="#fff" stroke-width="2.10" opacity="0.95"/><path d="M807.5 50.0 L808.6 47.0" stroke="#fff" stroke-width="2.10" opacity="0.95"/><path d="M808.6 47.0 L809.7 44.0" stroke="#fff" stroke-width="1.85" opacity="0.95"/><path d="M809.7 44.0 L810.8 41.0" stroke="#fff" stroke-width="1.56" opacity="0.95"/><path d="M810.8 41.0 L811.9 38.0" stroke="#fff" stroke-width="1.28" opacity="0.95"/><path d="M811.9 38.0 L813.0 35.0" stroke="#fff" stroke-width="0.99" opacity="0.95"/><path d="M813.0 35.0 L814.0 32.0" stroke="#fff" stroke-width="0.70" opacity="0.95"/><path d="M814.0 32.0 L815.1 29.0" stroke="#fff" stroke-width="0.50" opacity="0.95"/><path d="M537.9 107.8 L535.3 122.7" stroke="#fff" stroke-width="0.45" opacity="0.9"/><path d="M539.8 105.3 L550.9 102.6" stroke="#fff" stroke-width="0.45" opacity="0.9"/><path d="M541.5 103.2 L551.9 101.3" stroke="#fff" stroke-width="0.45" opacity="0.9"/><path d="M542.8 101.6 L552.8 100.2" stroke="#fff" stroke-width="0.45" opacity="0.9"/><path d="M543.9 100.2 L553.4 99.4" stroke="#fff" stroke-width="0.45" opacity="0.9"/><path d="M545.1 98.6 L554.0 98.6" stroke="#fff" stroke-width="0.45" opacity="0.9"/><path d="M546.3 97.1 L554.6 97.8" stroke="#fff" stroke-width="0.45" opacity="0.9"/><path d="M547.2 96.0 L555.2 97.1" stroke="#fff" stroke-width="0.45" opacity="0.9"/><path d="M548.1 94.9 L555.7 96.5" stroke="#fff" stroke-width="0.45" opacity="0.9"/><path d="M548.9 93.9 L556.1 95.9" stroke="#fff" stroke-width="0.45" opacity="0.9"/><path d="M550.9 102.6 L549.3 117.8" stroke="#fff" stroke-width="0.45" opacity="0.9"/><path d="M551.9 101.3 L565.1 97.0" stroke="#fff" stroke-width="0.45" opacity="0.9"/><path d="M552.8 100.2 L565.1 97.0" stroke="#fff" stroke-width="0.45" opacity="0.9"/><path d="M553.4 99.4 L565.1 97.0" stroke="#fff" stroke-width="0.45" opacity="0.9"/><path d="M554.0 98.6 L565.1 97.0" stroke="#fff" stroke-width="0.45" opacity="0.9"/><path d="M554.6 97.8 L565.1 97.0" stroke="#fff" stroke-width="0.45" opacity="0.9"/><path d="M555.2 97.1 L565.1 97.0" stroke="#fff" stroke-width="0.45" opacity="0.9"/><path d="M555.7 96.5 L565.1 97.0" stroke="#fff" stroke-width="0.45" opacity="0.9"/><path d="M556.1 95.9 L565.1 97.0" stroke="#fff" stroke-width="0.45" opacity="0.9"/><path d="M556.5 95.4 L565.1 97.0" stroke="#fff" stroke-width="0.45" opacity="0.9"/><path d="M565.1 97.0 L564.5 112.4" stroke="#fff" stroke-width="0.45" opacity="0.9"/><path d="M565.1 97.0 L580.4 90.9" stroke="#fff" stroke-width="0.45" opacity="0.9"/><path d="M565.1 97.0 L579.4 92.2" stroke="#fff" stroke-width="0.45" opacity="0.9"/><path d="M565.1 97.0 L578.5 93.4" stroke="#fff" stroke-width="0.45" opacity="0.9"/><path d="M565.1 97.0 L577.8 94.4" stroke="#fff" stroke-width="0.45" opacity="0.9"/><path d="M565.1 97.0 L577.2 95.2" stroke="#fff" stroke-width="0.45" opacity="0.9"/><path d="M565.1 97.0 L576.6 96.1" stroke="#fff" stroke-width="0.45" opacity="0.9"/><path d="M565.1 97.0 L575.9 96.9" stroke="#fff" stroke-width="0.45" opacity="0.9"/><path d="M565.1 97.0 L575.4 97.6" stroke="#fff" stroke-width="0.45" opacity="0.9"/><path d="M565.1 97.0 L575.0 98.2" stroke="#fff" stroke-width="0.45" opacity="0.9"/><path d="M580.4 90.9 L581.2 106.0" stroke="#fff" stroke-width="0.45" opacity="0.9"/><path d="M579.4 92.2 L596.7 84.4" stroke="#fff" stroke-width="0.45" opacity="0.9"/><path d="M578.5 93.4 L594.7 87.2" stroke="#fff" stroke-width="0.45" opacity="0.9"/><path d="M577.8 94.4 L593.0 89.6" stroke="#fff" stroke-width="0.45" opacity="0.9"/><path d="M577.2 95.2 L591.6 91.5" stroke="#fff" stroke-width="0.45" opacity="0.9"/><path d="M576.6 96.1 L590.4 93.2" stroke="#fff" stroke-width="0.45" opacity="0.9"/><path d="M575.9 96.9 L589.1 95.1" stroke="#fff" stroke-width="0.45" opacity="0.9"/><path d="M575.4 97.6 L587.8 96.8" stroke="#fff" stroke-width="0.45" opacity="0.9"/><path d="M575.0 98.2 L586.8 98.3" stroke="#fff" stroke-width="0.45" opacity="0.9"/><path d="M574.5 98.8 L585.8 99.6" stroke="#fff" stroke-width="0.45" opacity="0.9"/><path d="M596.7 84.4 L600.2 97.4" stroke="#fff" stroke-width="0.45" opacity="0.9"/><path d="M594.7 87.2 L614.0 77.5" stroke="#fff" stroke-width="0.45" opacity="0.9"/><path d="M593.0 89.6 L611.0 81.8" stroke="#fff" stroke-width="0.45" opacity="0.9"/><path d="M591.6 91.5 L608.4 85.6" stroke="#fff" stroke-width="0.45" opacity="0.9"/><path d="M590.4 93.2 L606.4 88.5" stroke="#fff" stroke-width="0.45" opacity="0.9"/><path d="M589.1 95.1 L604.6 91.1" stroke="#fff" stroke-width="0.45" opacity="0.9"/><path d="M587.8 96.8 L602.6 94.0" stroke="#fff" stroke-width="0.45" opacity="0.9"/><path d="M586.8 98.3 L600.6 96.7" stroke="#fff" stroke-width="0.45" opacity="0.9"/><path d="M585.8 99.6 L599.1 99.0" stroke="#fff" stroke-width="0.45" opacity="0.9"/><path d="M584.9 100.8 L597.6 101.1" stroke="#fff" stroke-width="0.45" opacity="0.9"/><path d="M614.0 77.5 L619.3 89.4" stroke="#fff" stroke-width="0.45" opacity="0.9"/><path d="M611.0 81.8 L632.1 70.3" stroke="#fff" stroke-width="0.45" opacity="0.9"/><path d="M608.4 85.6 L628.2 76.1" stroke="#fff" stroke-width="0.45" opacity="0.9"/><path d="M606.4 88.5 L624.8 81.3" stroke="#fff" stroke-width="0.45" opacity="0.9"/><path d="M604.6 91.1 L622.1 85.3" stroke="#fff" stroke-width="0.45" opacity="0.9"/><path d="M602.6 94.0 L619.7 88.8" stroke="#fff" stroke-width="0.45" opacity="0.9"/><path d="M600.6 96.7 L617.0 92.8" stroke="#fff" stroke-width="0.45" opacity="0.9"/><path d="M599.1 99.0 L614.5 96.6" stroke="#fff" stroke-width="0.49" opacity="0.9"/><path d="M597.6 101.1 L612.4 99.7" stroke="#fff" stroke-width="0.55" opacity="0.9"/><path d="M596.3 103.0 L610.4 102.7" stroke="#fff" stroke-width="0.60" opacity="0.9"/><path d="M632.1 70.3 L640.2 79.6" stroke="#fff" stroke-width="0.45" opacity="0.9"/><path d="M628.2 76.1 L651.0 62.8" stroke="#fff" stroke-width="0.45" opacity="0.9"/><path d="M624.8 81.3 L646.3 70.1" stroke="#fff" stroke-width="0.45" opacity="0.9"/><path d="M622.1 85.3 L642.1 76.7" stroke="#fff" stroke-width="0.45" opacity="0.9"/><path d="M619.7 88.8 L638.7 81.9" stroke="#fff" stroke-width="0.45" opacity="0.9"/><path d="M617.0 92.8 L635.8 86.4" stroke="#fff" stroke-width="0.54" opacity="0.9"/><path d="M614.5 96.6 L632.5 91.6" stroke="#fff" stroke-width="0.64" opacity="0.9"/><path d="M612.4 99.7 L629.3 96.5" stroke="#fff" stroke-width="0.73" opacity="0.9"/><path d="M610.4 102.7 L626.6 100.6" stroke="#fff" stroke-width="0.80" opacity="0.9"/><path d="M608.6 105.4 L624.2 104.4" stroke="#fff" stroke-width="0.88" opacity="0.9"/><path d="M651.0 62.8 L663.2 68.5" stroke="#fff" stroke-width="0.45" opacity="0.9"/><path d="M646.3 70.1 L671.8 54.6" stroke="#fff" stroke-width="0.45" opacity="0.9"/><path d="M642.1 76.7 L666.3 63.5" stroke="#fff" stroke-width="0.45" opacity="0.9"/><path d="M638.7 81.9 L661.3 71.6" stroke="#fff" stroke-width="0.51" opacity="0.9"/><path d="M635.8 86.4 L657.3 78.0" stroke="#fff" stroke-width="0.62" opacity="0.9"/><path d="M632.5 91.6 L653.8 83.7" stroke="#fff" stroke-width="0.75" opacity="0.9"/><path d="M629.3 96.5 L649.9 90.2" stroke="#fff" stroke-width="0.88" opacity="0.9"/><path d="M626.6 100.6 L646.0 96.4" stroke="#fff" stroke-width="0.99" opacity="0.9"/><path d="M624.2 104.4 L642.9 101.5" stroke="#fff" stroke-width="1.05" opacity="0.9"/><path d="M621.9 107.9 L639.9 106.4" stroke="#fff" stroke-width="1.05" opacity="0.9"/><path d="M671.8 54.6 L687.7 57.7" stroke="#fff" stroke-width="0.45" opacity="0.9"/><path d="M666.3 63.5 L694.9 45.4" stroke="#fff" stroke-width="0.45" opacity="0.9"/><path d="M661.3 71.6 L688.6 56.2" stroke="#fff" stroke-width="0.54" opacity="0.9"/><path d="M657.3 78.0 L682.9 65.9" stroke="#fff" stroke-width="0.71" opacity="0.9"/><path d="M653.8 83.7 L678.4 73.7" stroke="#fff" stroke-width="0.86" opacity="0.9"/><path d="M649.9 90.2 L674.3 80.6" stroke="#fff" stroke-width="1.03" opacity="0.9"/><path d="M646.0 96.4 L669.7 88.6" stroke="#fff" stroke-width="1.05" opacity="0.9"/><path d="M642.9 101.5 L665.2 96.3" stroke="#fff" stroke-width="1.05" opacity="0.9"/><path d="M639.9 106.4 L661.6 102.6" stroke="#fff" stroke-width="1.05" opacity="0.9"/><path d="M637.1 110.8 L658.1 108.6" stroke="#fff" stroke-width="1.05" opacity="0.9"/><path d="M694.9 45.4 L711.2 48.9" stroke="#fff" stroke-width="0.45" opacity="0.9"/><path d="M688.6 56.2 L718.3 36.1" stroke="#fff" stroke-width="0.45" opacity="0.9"/><path d="M682.9 65.9 L711.4 48.6" stroke="#fff" stroke-width="0.68" opacity="0.9"/><path d="M678.4 73.7 L705.2 60.1" stroke="#fff" stroke-width="0.90" opacity="0.9"/><path d="M674.3 80.6 L700.1 69.2" stroke="#fff" stroke-width="1.05" opacity="0.9"/><path d="M669.7 88.6 L695.7 77.5" stroke="#fff" stroke-width="1.05" opacity="0.9"/><path d="M665.2 96.3 L690.5 86.9" stroke="#fff" stroke-width="1.05" opacity="0.9"/><path d="M661.6 102.6 L685.4 96.1" stroke="#fff" stroke-width="1.05" opacity="0.9"/><path d="M658.1 108.6 L681.3 103.7" stroke="#fff" stroke-width="1.05" opacity="0.9"/><path d="M654.8 114.2 L677.3 111.0" stroke="#fff" stroke-width="1.05" opacity="0.9"/><path d="M718.3 36.1 L733.5 43.2" stroke="#fff" stroke-width="0.45" opacity="0.9"/><path d="M711.4 48.6 L741.9 26.7" stroke="#fff" stroke-width="0.45" opacity="0.9"/><path d="M705.2 60.1 L734.7 41.0" stroke="#fff" stroke-width="0.79" opacity="0.9"/><path d="M700.1 69.2 L728.0 54.1" stroke="#fff" stroke-width="1.05" opacity="0.9"/><path d="M695.7 77.5 L722.6 64.6" stroke="#fff" stroke-width="1.05" opacity="0.9"/><path d="M690.5 86.9 L717.7 74.2" stroke="#fff" stroke-width="1.05" opacity="0.9"/><path d="M685.4 96.1 L712.1 85.2" stroke="#fff" stroke-width="1.05" opacity="0.9"/><path d="M681.3 103.7 L706.6 96.0" stroke="#fff" stroke-width="1.05" opacity="0.9"/><path d="M677.3 111.0 L702.0 105.0" stroke="#fff" stroke-width="1.05" opacity="0.9"/><path d="M673.6 117.8 L697.6 113.6" stroke="#fff" stroke-width="1.05" opacity="0.9"/><path d="M741.9 26.7 L754.3 38.8" stroke="#fff" stroke-width="0.45" opacity="0.9"/><path d="M734.7 41.0 L764.2 17.9" stroke="#fff" stroke-width="0.45" opacity="0.9"/><path d="M728.0 54.1 L756.7 33.7" stroke="#fff" stroke-width="0.81" opacity="0.9"/><path d="M722.6 64.6 L749.8 48.3" stroke="#fff" stroke-width="1.05" opacity="0.9"/><path d="M717.7 74.2 L744.1 60.2" stroke="#fff" stroke-width="1.05" opacity="0.9"/><path d="M712.1 85.2 L739.0 71.0" stroke="#fff" stroke-width="1.05" opacity="0.9"/><path d="M706.6 96.0 L733.1 83.5" stroke="#fff" stroke-width="1.05" opacity="0.9"/><path d="M702.0 105.0 L727.3 95.8" stroke="#fff" stroke-width="1.05" opacity="0.9"/><path d="M697.6 113.6 L722.4 106.1" stroke="#fff" stroke-width="1.05" opacity="0.9"/><path d="M693.5 121.7 L717.7 116.1" stroke="#fff" stroke-width="1.05" opacity="0.9"/><path d="M764.2 17.9 L775.2 35.3" stroke="#fff" stroke-width="0.45" opacity="0.9"/><path d="M756.7 33.7 L786.7 8.9" stroke="#fff" stroke-width="0.45" opacity="0.9"/><path d="M749.8 48.3 L779.1 26.3" stroke="#fff" stroke-width="0.78" opacity="0.9"/><path d="M744.1 60.2 L772.1 42.5" stroke="#fff" stroke-width="1.05" opacity="0.9"/><path d="M739.0 71.0 L766.3 55.7" stroke="#fff" stroke-width="1.05" opacity="0.9"/><path d="M733.1 83.5 L761.1 67.7" stroke="#fff" stroke-width="1.05" opacity="0.9"/><path d="M727.3 95.8 L755.0 81.7" stroke="#fff" stroke-width="1.05" opacity="0.9"/><path d="M722.4 106.1 L748.9 95.7" stroke="#fff" stroke-width="1.05" opacity="0.9"/><path d="M717.7 116.1 L743.8 107.4" stroke="#fff" stroke-width="1.05" opacity="0.9"/><path d="M713.3 125.5 L738.9 118.7" stroke="#fff" stroke-width="1.05" opacity="0.9"/><path d="M786.7 8.9 L795.2 32.3" stroke="#fff" stroke-width="0.45" opacity="0.9"/><path d="M772.1 42.5 L800.4 19.2" stroke="#fff" stroke-width="0.70" opacity="0.9"/><path d="M766.3 55.7 L793.4 36.8" stroke="#fff" stroke-width="1.05" opacity="0.9"/><path d="M761.1 67.7 L787.7 51.3" stroke="#fff" stroke-width="1.05" opacity="0.9"/><path d="M755.0 81.7 L782.4 64.5" stroke="#fff" stroke-width="1.05" opacity="0.9"/><path d="M748.9 95.7 L776.2 80.0" stroke="#fff" stroke-width="1.05" opacity="0.9"/><path d="M743.8 107.4 L770.1 95.5" stroke="#fff" stroke-width="1.05" opacity="0.9"/><path d="M738.9 118.7 L764.9 108.6" stroke="#fff" stroke-width="1.05" opacity="0.9"/><path d="M734.2 129.5 L759.8 121.3" stroke="#fff" stroke-width="1.05" opacity="0.9"/><path d="M793.4 36.8 L821.1 12.4" stroke="#fff" stroke-width="0.61" opacity="0.9"/><path d="M787.7 51.3 L814.3 31.3" stroke="#fff" stroke-width="1.05" opacity="0.9"/><path d="M782.4 64.5 L808.6 47.0" stroke="#fff" stroke-width="1.05" opacity="0.9"/><path d="M776.2 80.0 L803.5 61.3" stroke="#fff" stroke-width="1.05" opacity="0.9"/><path d="M770.1 95.5 L797.3 78.3" stroke="#fff" stroke-width="1.05" opacity="0.9"/><path d="M764.9 108.6 L791.2 95.4" stroke="#fff" stroke-width="1.05" opacity="0.9"/><path d="M759.8 121.3 L786.0 109.8" stroke="#fff" stroke-width="1.05" opacity="0.9"/><path d="M755.0 133.5 L780.9 124.0" stroke="#fff" stroke-width="1.05" opacity="0.9"/></g></svg>
</div>
<div class="a" style="left:1px;top:106px;width:788px;height:1px;background:rgba(0,0,0,0.06)"></div>
<div class="a" style="left:1px;top:108px;width:788px;height:1px;background:#f7f7f7"></div>
<!-- rows -->
<div class="a" style="left:1px;top:114px;width:788px;height:50px;background:#fff"></div>
<div class="a" style="left:1px;top:170px;width:388px;height:125px;background:#8cbb29"></div>
<div class="a" style="left:401px;top:170px;width:387px;height:125px;background:#1b506e"></div>
<div class="a" style="left:1px;top:301px;width:788px;height:40px;background:#fff"></div>
<!-- icons -->
<svg class="a" style="left:0;top:0" width="792" height="672" viewBox="0 0 792 672">
  <!-- title icon -->
  <g>
    <defs>
      <linearGradient id="gb" x1="0" y1="0" x2="1" y2="0.3"><stop offset="0" stop-color="#0b22d0"/><stop offset="0.45" stop-color="#0018e0"/><stop offset="0.5" stop-color="#8ea4f4"/><stop offset="1" stop-color="#d2dcfa"/></linearGradient>
      <linearGradient id="gbase" x1="0" y1="0" x2="0" y2="1"><stop offset="0" stop-color="#c8d4dc"/><stop offset="1" stop-color="#9fb0bc"/></linearGradient>
    </defs>
    <rect x="3.5" y="7" width="11" height="5" fill="#b8e0b0"/>
    <rect x="3.8" y="7.5" width="2.5" height="4.5" fill="#60d060"/>
    <path d="M1.5 12 L6 12 L6 17 L1.5 17 Z" fill="#c4c8cc"/>
    <path d="M1.5 16.5 L17.5 17 L19 21 L18 25.5 L9 26 L1.5 24 Z" fill="url(#gbase)"/>
    <path d="M6 8.5 L17.5 9.5 L18.5 18 L6.2 16.5 Z" fill="url(#gb)"/>
    <rect x="4" y="20" width="1" height="1" fill="#a4b2be"/><rect x="9" y="21" width="1" height="1" fill="#a4b2be"/>
  </g>
  <!-- window controls -->
  <rect x="646" y="15" width="12" height="1" fill="#000"/>
  <rect x="704.5" y="10.5" width="11" height="11" fill="none" stroke="#000" stroke-width="1"/>
  <path d="M763 10 L775 22 M775 10 L763 22" stroke="#000" stroke-width="1.1" fill="none"/>
  <!-- header chart icon -->
  <rect x="11.75" y="61.65" width="40.5" height="29.2" fill="#718390" stroke="#2c5b80" stroke-width="1.5"/>
  <path d="M15.3 80.4 L20.7 74.7 L26.2 85 L31.6 72.2 L37.7 68.9 L43.2 76.2 L48.3 65.9" fill="none" stroke="#2c5b80" stroke-width="3.6" stroke-linejoin="miter" stroke-linecap="butt"/>
  <!-- checkbox icon -->
  <path d="M329 197 Q323 197 323 203 L323 235 Q323 241 329 241 L363 241 Q369 241 369 235 L369 203 Q369 197 363 197 Z" fill="none" stroke="#c8fa64" stroke-width="7"/>
  <path d="M347.5 226.5 L373 190.5" fill="none" stroke="#8cbb29" stroke-width="23" stroke-linecap="butt"/>
  <path d="M335.5 214 L347.5 226.5 L373 190.5" fill="none" stroke="#c8fa64" stroke-width="8" stroke-linecap="round" stroke-linejoin="round"/>
  <!-- monitor icon -->
  <rect x="721.3" y="193" width="52.7" height="35.4" rx="2" fill="#89c0e0"/>
  <rect x="725.6" y="197.7" width="44.6" height="24.5" fill="#3a7192"/>
  <rect x="769" y="225" width="1.2" height="1.2" fill="#3a7192"/>
  <path d="M743.3 228 L752.2 228 Q752 233.6 756 233.6 L763.1 233.6 L763.1 237.8 L732.4 237.8 L732.4 233.6 L739.5 233.6 Q743.5 233.6 743.3 228 Z" fill="#89c0e0"/>
  <!-- details chevron -->
  <circle cx="15.6" cy="361.8" r="11.2" fill="#fbfbfb" stroke="#333" stroke-width="1.2"/>
  <path d="M11.5 364 L15.8 359.8 L20.1 364" fill="none" stroke="#333" stroke-width="2.4"/>
  <!-- big digits -->
  <path fill="#ffffff" fill-rule="evenodd" d="M33.3 198.2 L38.5 198.2 L38.5 226.2 L43.8 226.2 L43.8 230.3 L38.5 230.3 L38.5 240 L33.3 240 L33.3 230.3 L13.8 230.3 L13.8 226.2 Z M33.4 205.2 L33.4 226.2 L19.0 226.2 Z"/>
  <path fill="#ffffff" fill-rule="evenodd" d="M429.65 197.00 C437.65 197.00 443.45 204.01 443.45 218.90 C443.45 233.79 437.65 240.80 429.65 240.80 C421.65 240.80 415.85 233.79 415.85 218.90 C415.85 204.01 421.65 197.00 429.65 197.00 Z M429.70 200.60 C435.28 200.60 439.00 205.70 439.00 218.80 C439.00 231.90 435.28 237.00 429.70 237.00 C424.12 237.00 420.40 231.90 420.40 218.80 C420.40 205.70 424.12 200.60 429.70 200.60 Z"/>
  <!-- sum line -->
  <rect x="660" y="445" width="107" height="1" fill="#000"/>
</svg>
<!-- buttons -->
<div class="a" style="left:539px;top:635px;width:118px;height:23px;border:1px solid #707070;background:#dddddd"></div>
<div class="a" style="left:669px;top:635px;width:118px;height:23px;border:1px solid #adb2b5;background:#f4f4f4"></div>
<!-- bottom strip -->
<div class="a" style="left:1px;top:668px;width:790px;height:3px;background:linear-gradient(#a9b5c5,#b9c7d9)"></div>
<div class="a" style="left:1px;top:668px;width:9px;height:3px;background:#d3dded"></div>
<div class="a" style="left:394px;top:668px;width:5px;height:3px;box-sizing:border-box;border:1px solid #444;border-bottom:none;background:#fff"></div>
<svg class="a" style="left:780px;top:655px" width="12" height="14" viewBox="780 655 12 14">
  <rect x="787" y="658" width="1.5" height="1.5" fill="#b4bcc8"/>
  <rect x="787" y="662" width="1.5" height="1.5" fill="#b4bcc8"/>
  <rect x="783.5" y="665.5" width="1.5" height="1.5" fill="#b4bcc8"/>
  <rect x="787" y="665.5" width="1.5" height="1.5" fill="#b4bcc8"/>
</svg>
<div class="t" id="t_title" style="left:25.00px;top:9.16px;font-size:16.00px;letter-spacing:-0.783px;font-weight:400;color:#000000">Inventory and Assessment</div>
<div class="t" id="t_hdr" style="left:60.00px;top:66.06px;font-size:24.50px;letter-spacing:0.143px;font-weight:700;color:#ffffff">Data Collection</div>
<div class="t" id="t_total" style="left:14.00px;top:132.16px;font-size:16.00px;letter-spacing:-0.667px;font-weight:400;color:#000000">Total machines discovered</div>
<div class="t" id="t_totn" style="left:763.00px;top:129.38px;font-size:22.00px;letter-spacing:0.000px;font-weight:700;color:#000000">4</div>
<div class="t" id="t_lab1" style="left:12.50px;top:258.72px;font-size:22.30px;letter-spacing:0.158px;font-weight:400;color:#d2f58c">Machines Inventoried</div>
<div class="t" id="t_lab2" style="left:413.00px;top:257.72px;font-size:22.30px;letter-spacing:-0.100px;font-weight:400;color:#8ed0f2">Collections Remaining</div>
<div class="t" id="t_assess" style="left:13.30px;top:314.16px;font-size:16.00px;letter-spacing:-1.183px;font-weight:400;color:#000000">Assessment</div>
<div class="t" id="t_compl" style="left:699.50px;top:313.90px;font-size:15.00px;letter-spacing:-0.166px;font-weight:700;color:#000000">Completed</div>
<div class="t" id="t_details" style="left:32.00px;top:354.76px;font-size:16.00px;letter-spacing:-0.630px;font-weight:400;color:#000000">Details</div>
<div class="t" id="t_cd" style="left:21.80px;top:393.95px;font-size:14.00px;letter-spacing:-0.267px;font-weight:700;color:#4f4f4f">Computer Discovery</div>
<div class="t" id="t_man" style="left:32.00px;top:411.95px;font-size:14.00px;letter-spacing:0.114px;font-weight:400;color:#4f4f4f">Manually entered/imported from file:</div>
<div class="t" id="t_inv" style="left:32.00px;top:430.05px;font-size:14.00px;letter-spacing:-0.038px;font-weight:400;color:#4f4f4f">Inventory data (guest/host):</div>
<div class="t" id="t_td" style="left:660.50px;top:393.05px;font-size:14.00px;letter-spacing:-0.314px;font-weight:700;color:#4f4f4f">Total Discovered</div>
<div class="t" id="t_n1" style="left:759.10px;top:410.95px;font-size:14.00px;letter-spacing:0.000px;font-weight:400;color:#4f4f4f">1</div>
<div class="t" id="t_n3" style="left:760.00px;top:428.65px;font-size:14.00px;letter-spacing:0.000px;font-weight:400;color:#4f4f4f">3</div>
<div class="t" id="t_n4" style="left:759.00px;top:448.85px;font-size:14.00px;letter-spacing:0.000px;font-weight:400;color:#4f4f4f">4</div>
<div class="t" id="t_new" style="left:32.80px;top:477.05px;font-size:14.00px;letter-spacing:-0.232px;font-weight:400;color:#4f4f4f">Newly discovered:</div>
<div class="t" id="t_retry" style="left:32.80px;top:494.95px;font-size:14.00px;letter-spacing:-0.109px;font-weight:400;color:#4f4f4f">Retrying from previous inventory:</div>
<div class="t" id="t_compp" style="left:32.80px;top:514.15px;font-size:14.00px;letter-spacing:-0.150px;font-weight:400;color:#4f4f4f">Completed previously:</div>
<div class="t" id="t_m4" style="left:386.90px;top:477.05px;font-size:14.00px;letter-spacing:0.000px;font-weight:400;color:#4f4f4f">4</div>
<div class="t" id="t_m0a" style="left:387.20px;top:494.95px;font-size:14.00px;letter-spacing:0.000px;font-weight:400;color:#4f4f4f">0</div>
<div class="t" id="t_m0b" style="left:387.20px;top:513.95px;font-size:14.00px;letter-spacing:0.000px;font-weight:400;color:#4f4f4f">0</div>
<div class="t" id="t_cs" style="left:22.50px;top:542.05px;font-size:14.00px;letter-spacing:-0.333px;font-weight:700;color:#4f4f4f">Collector Status</div>
<div class="t" id="t_oc" style="left:682.50px;top:541.95px;font-size:14.00px;letter-spacing:-0.283px;font-weight:700;color:#4f4f4f">Object Count</div>
<div class="t" id="t_wmi" style="left:33.30px;top:559.75px;font-size:14.00px;letter-spacing:-0.200px;font-weight:400;color:#4f4f4f">WMI</div>
<div class="t" id="t_reg" style="left:32.30px;top:579.15px;font-size:14.00px;letter-spacing:-0.513px;font-weight:400;color:#4f4f4f">Registry</div>
<div class="t" id="t_sql" style="left:32.30px;top:596.95px;font-size:14.00px;letter-spacing:-1.900px;font-weight:400;color:#4f4f4f">SQL</div>
<div class="t" id="t_1217" style="left:736.00px;top:559.95px;font-size:14.00px;letter-spacing:-0.950px;font-weight:400;color:#4f4f4f">1,217</div>
<div class="t" id="t_614" style="left:745.00px;top:578.95px;font-size:14.00px;letter-spacing:-0.700px;font-weight:400;color:#4f4f4f">614</div>
<div class="t" id="t_355" style="left:745.00px;top:596.85px;font-size:14.00px;letter-spacing:-0.700px;font-weight:400;color:#4f4f4f">355</div>
<div class="t" id="t_close" style="left:580.10px;top:639.96px;font-size:16.00px;letter-spacing:-0.950px;font-weight:400;color:#000000">Close</div>
<div class="t" id="t_cancel" style="left:706.00px;top:639.66px;font-size:16.00px;letter-spacing:-0.900px;font-weight:400;color:#838383">Cancel</div>
<div id="frame"></div>
</body></html>
